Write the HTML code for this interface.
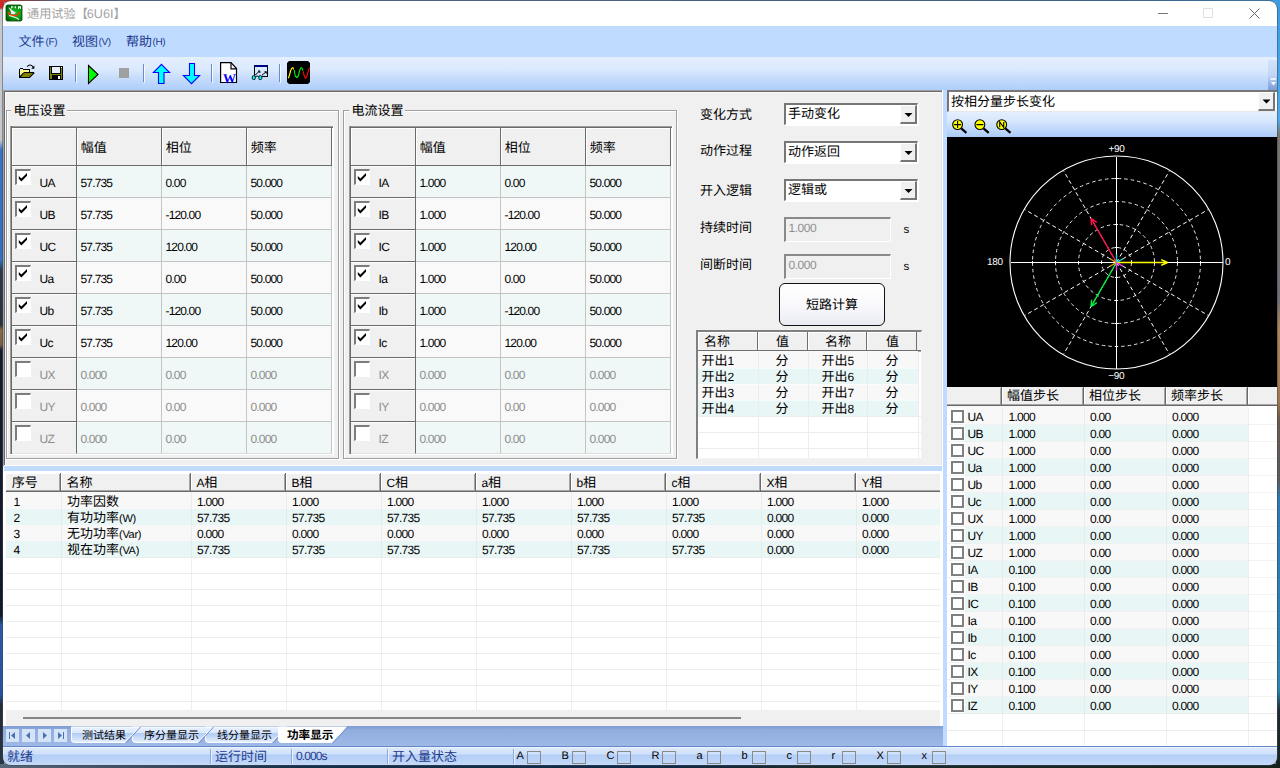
<!DOCTYPE html>
<html lang="zh"><head><meta charset="utf-8"><title>通用试验【6U6I】</title>
<style>
html,body{margin:0;padding:0}
body{width:1280px;height:768px;overflow:hidden;position:relative;background:#1c2a2a;font-family:"Liberation Sans","Noto Sans CJK SC",sans-serif;font-size:12px;line-height:16px;text-rendering:geometricPrecision;-webkit-font-smoothing:antialiased}
div,span.t{position:absolute;box-sizing:border-box}
span.t{white-space:nowrap;line-height:16px}
.c{font-size:13px;letter-spacing:0}
svg.ic{position:absolute;overflow:visible}
</style></head>
<body>
<div class="" style="left:0px;top:0px;width:1280px;height:768px;background:#8fa0b8"></div>
<div class="" style="left:0px;top:0px;width:4px;height:768px;background:linear-gradient(#d02424 0,#cf2a2a 8px,#c9c9cc 10px,#c6c8cc 140px,#3a74c4 150px,#3570c0 260px,#2a3a4c 270px,#27323c 325px,#8a6a40 330px,#7a6040 345px,#141c2c 350px,#10182a 615px,#2858a8 625px,#2452a0 695px,#232c38 705px,#2a3644 768px)"></div>
<div class="" style="left:1276px;top:0px;width:4px;height:768px;background:linear-gradient(#3a9ce2 0,#52aae8 120px,#7a746c 135px,#6f7078 300px,#b08658 330px,#a07850 400px,#6a5a4c 420px,#5a5a60 480px,#2c7ab4 500px,#2a86b0 690px,#1c2c30 710px,#16221e 768px)"></div>
<div class="" style="left:0px;top:0px;width:1280px;height:2px;background:linear-gradient(90deg,#c8302a 0,#c8302a 18px,#8a5a5a 40px,#5c7fb0 60px,#4a78b0 900px,#2f7fc0 1100px,#3aa0e6 1280px)"></div>
<div class="" style="left:0px;top:764px;width:1280px;height:4px;background:linear-gradient(90deg,#56677a 0,#3c4c60 150px,#14304c 300px,#0e2a48 650px,#1a2c30 800px,#15221c 1280px)"></div>
<div id="win" style="left:0;top:0;width:1280px;height:768px;clip-path:inset(1px 3px 3px 3px round 8px);background:#fff">
<span class="t " style="left:27px;top:6px;font-size:12px;color:#a2a2a2;"><span style="font-size:12.2px">通用试验【</span></span>
<span class="t " style="left:86.8px;top:6px;font-size:12.6px;color:#a2a2a2;">6U6I</span>
<span class="t " style="left:113.6px;top:6px;font-size:12px;color:#a2a2a2;"><span style="font-size:12.2px">】</span></span>
<div class="" style="left:1158px;top:13px;width:10px;height:1px;background:#777"></div>
<div class="" style="left:1203px;top:8px;width:10px;height:10px;border:1px solid #dedede;border-radius:1px"></div>
<svg class="ic" style="left:1249px;top:8px" width="11" height="11"><path d="M0.5 0.5L10.5 10.5M10.5 0.5L0.5 10.5" stroke="#666" stroke-width="1" fill="none"/></svg>
<div class="" style="left:0px;top:26px;width:1280px;height:31px;background:#bfdbff"></div>
<span class="t " style="left:18.5px;top:34px;font-size:11px;color:#1e3a8e;"><span class="c">文件</span></span>
<span class="t " style="left:45.5px;top:35px;font-size:10px;color:#1e3a8e;letter-spacing:-0.4px;">(F)</span>
<span class="t " style="left:72px;top:34px;font-size:11px;color:#1e3a8e;"><span class="c">视图</span></span>
<span class="t " style="left:98.5px;top:35px;font-size:10px;color:#1e3a8e;letter-spacing:-0.4px;">(V)</span>
<span class="t " style="left:126px;top:34px;font-size:11px;color:#1e3a8e;"><span class="c">帮助</span></span>
<span class="t " style="left:152.5px;top:35px;font-size:10px;color:#1e3a8e;letter-spacing:-0.4px;">(H)</span>
<div class="" style="left:0px;top:57px;width:1280px;height:33px;background:linear-gradient(#e4efff 0,#dceafe 35%,#c6dcfc 65%,#adcefb 100%)"></div>
<div class="" style="left:1268px;top:60px;width:10px;height:30px;background:linear-gradient(#d3e3fb 0,#c2d6f6 50%,#7c9cd6 100%);border-radius:0 3px 0 0"></div>
<div class="" style="left:75px;top:64px;width:1px;height:18px;background:#6a8ccb"></div>
<div class="" style="left:76px;top:65px;width:1px;height:18px;background:#fff;opacity:.8"></div>
<div class="" style="left:143px;top:64px;width:1px;height:18px;background:#6a8ccb"></div>
<div class="" style="left:144px;top:65px;width:1px;height:18px;background:#fff;opacity:.8"></div>
<div class="" style="left:211px;top:64px;width:1px;height:18px;background:#6a8ccb"></div>
<div class="" style="left:212px;top:65px;width:1px;height:18px;background:#fff;opacity:.8"></div>
<div class="" style="left:279px;top:64px;width:1px;height:18px;background:#6a8ccb"></div>
<div class="" style="left:280px;top:65px;width:1px;height:18px;background:#fff;opacity:.8"></div>
<div class="" style="left:3px;top:90px;width:939px;height:376px;background:#a0a0a0"></div>
<div class="" style="left:4px;top:91px;width:938px;height:375px;background:#696969"></div>
<div class="" style="left:5px;top:92px;width:937px;height:374px;background:#f9f9f9"></div>
<div class="" style="left:6px;top:93px;width:935px;height:372px;background:#f0f0f0"></div>
<div class="" style="left:6px;top:110px;width:333px;height:349px;border:1px solid #a0a0a0;box-shadow:1px 1px 0 #fff, inset 1px 1px 0 #fff"></div>
<div class="" style="left:11.4px;top:104px;width:56px;height:14px;background:#f0f0f0"></div>
<span class="t " style="left:13.4px;top:103px;font-size:12px;color:#000;"><span class="c">电压设置</span></span>
<div class="" style="left:343px;top:110px;width:334px;height:349px;border:1px solid #a0a0a0;box-shadow:1px 1px 0 #fff, inset 1px 1px 0 #fff"></div>
<div class="" style="left:349.4px;top:104px;width:56px;height:14px;background:#f0f0f0"></div>
<span class="t " style="left:351.4px;top:103px;font-size:12px;color:#000;"><span class="c">电流设置</span></span>
<div class="" style="left:10px;top:126px;width:324px;height:329px;background:#fff"></div>
<div class="" style="left:10px;top:126px;width:323px;height:2px;background:linear-gradient(#9c9c9c 50%,#6b6b6b 50%)"></div>
<div class="" style="left:10px;top:126px;width:2px;height:328px;background:linear-gradient(90deg,#9c9c9c 50%,#6b6b6b 50%)"></div>
<div class="" style="left:12px;top:128px;width:65px;height:38px;background:#f0f0f0;border-right:1px solid #6b6b6b;border-bottom:1px solid #6b6b6b;box-shadow:inset 1px 1px 0 #fff"></div>
<div class="" style="left:77px;top:128px;width:85px;height:38px;background:#f0f0f0;border-right:1px solid #6b6b6b;border-bottom:1px solid #6b6b6b;box-shadow:inset 1px 1px 0 #fff"></div>
<div class="" style="left:162px;top:128px;width:85px;height:38px;background:#f0f0f0;border-right:1px solid #6b6b6b;border-bottom:1px solid #6b6b6b;box-shadow:inset 1px 1px 0 #fff"></div>
<div class="" style="left:247px;top:128px;width:85px;height:38px;background:#f0f0f0;border-right:1px solid #6b6b6b;border-bottom:1px solid #6b6b6b;box-shadow:inset 1px 1px 0 #fff"></div>
<span class="t " style="left:80.8px;top:140px;font-size:12px;color:#000;"><span class="c">幅值</span></span>
<span class="t " style="left:165.8px;top:140px;font-size:12px;color:#000;"><span class="c">相位</span></span>
<span class="t " style="left:250.8px;top:140px;font-size:12px;color:#000;"><span class="c">频率</span></span>
<div class="" style="left:12px;top:166px;width:65px;height:32px;background:#f0f0f0;border-right:1px solid #6b6b6b;border-bottom:1px solid #6b6b6b;box-shadow:inset 0 1px 0 #fff"></div>
<div class="" style="left:77px;top:166px;width:85px;height:32px;background:#eff8f7;border-right:1px solid #c4c4c4;border-bottom:1px solid #c4c4c4"></div>
<div class="" style="left:162px;top:166px;width:85px;height:32px;background:#eff8f7;border-right:1px solid #c4c4c4;border-bottom:1px solid #c4c4c4"></div>
<div class="" style="left:247px;top:166px;width:85px;height:32px;background:#eff8f7;border-right:1px solid #c4c4c4;border-bottom:1px solid #c4c4c4"></div>
<div class="" style="left:15px;top:169px;width:16px;height:16px;background:#fff;border-top:2px solid #7d7d7d;border-left:2px solid #7d7d7d;border-right:1px solid #fff;border-bottom:1px solid #fff"></div>
<svg class="ic" style="left:15px;top:169px" width="16" height="16"><path d="M3.8 7L6.4 9.6L12 4V6.8L6.4 12.4L3.8 9.8z" fill="#000"/></svg>
<span class="t " style="left:39.5px;top:175px;font-size:12px;color:#000;letter-spacing:-0.55px;">UA</span>
<span class="t " style="left:80.5px;top:175px;font-size:12px;color:#000;letter-spacing:-0.85px;">57.735</span>
<span class="t " style="left:165.5px;top:175px;font-size:12px;color:#000;letter-spacing:-0.85px;">0.00</span>
<span class="t " style="left:250.5px;top:175px;font-size:12px;color:#000;letter-spacing:-0.85px;">50.000</span>
<div class="" style="left:12px;top:198px;width:65px;height:32px;background:#f0f0f0;border-right:1px solid #6b6b6b;border-bottom:1px solid #6b6b6b;box-shadow:inset 0 1px 0 #fff"></div>
<div class="" style="left:77px;top:198px;width:85px;height:32px;background:#f9f9f9;border-right:1px solid #c4c4c4;border-bottom:1px solid #c4c4c4"></div>
<div class="" style="left:162px;top:198px;width:85px;height:32px;background:#f9f9f9;border-right:1px solid #c4c4c4;border-bottom:1px solid #c4c4c4"></div>
<div class="" style="left:247px;top:198px;width:85px;height:32px;background:#f9f9f9;border-right:1px solid #c4c4c4;border-bottom:1px solid #c4c4c4"></div>
<div class="" style="left:15px;top:201px;width:16px;height:16px;background:#fff;border-top:2px solid #7d7d7d;border-left:2px solid #7d7d7d;border-right:1px solid #fff;border-bottom:1px solid #fff"></div>
<svg class="ic" style="left:15px;top:201px" width="16" height="16"><path d="M3.8 7L6.4 9.6L12 4V6.8L6.4 12.4L3.8 9.8z" fill="#000"/></svg>
<span class="t " style="left:39.5px;top:207px;font-size:12px;color:#000;letter-spacing:-0.55px;">UB</span>
<span class="t " style="left:80.5px;top:207px;font-size:12px;color:#000;letter-spacing:-0.85px;">57.735</span>
<span class="t " style="left:165.5px;top:207px;font-size:12px;color:#000;letter-spacing:-0.85px;">-120.00</span>
<span class="t " style="left:250.5px;top:207px;font-size:12px;color:#000;letter-spacing:-0.85px;">50.000</span>
<div class="" style="left:12px;top:230px;width:65px;height:32px;background:#f0f0f0;border-right:1px solid #6b6b6b;border-bottom:1px solid #6b6b6b;box-shadow:inset 0 1px 0 #fff"></div>
<div class="" style="left:77px;top:230px;width:85px;height:32px;background:#eff8f7;border-right:1px solid #c4c4c4;border-bottom:1px solid #c4c4c4"></div>
<div class="" style="left:162px;top:230px;width:85px;height:32px;background:#eff8f7;border-right:1px solid #c4c4c4;border-bottom:1px solid #c4c4c4"></div>
<div class="" style="left:247px;top:230px;width:85px;height:32px;background:#eff8f7;border-right:1px solid #c4c4c4;border-bottom:1px solid #c4c4c4"></div>
<div class="" style="left:15px;top:233px;width:16px;height:16px;background:#fff;border-top:2px solid #7d7d7d;border-left:2px solid #7d7d7d;border-right:1px solid #fff;border-bottom:1px solid #fff"></div>
<svg class="ic" style="left:15px;top:233px" width="16" height="16"><path d="M3.8 7L6.4 9.6L12 4V6.8L6.4 12.4L3.8 9.8z" fill="#000"/></svg>
<span class="t " style="left:39.5px;top:239px;font-size:12px;color:#000;letter-spacing:-0.55px;">UC</span>
<span class="t " style="left:80.5px;top:239px;font-size:12px;color:#000;letter-spacing:-0.85px;">57.735</span>
<span class="t " style="left:165.5px;top:239px;font-size:12px;color:#000;letter-spacing:-0.85px;">120.00</span>
<span class="t " style="left:250.5px;top:239px;font-size:12px;color:#000;letter-spacing:-0.85px;">50.000</span>
<div class="" style="left:12px;top:262px;width:65px;height:32px;background:#f0f0f0;border-right:1px solid #6b6b6b;border-bottom:1px solid #6b6b6b;box-shadow:inset 0 1px 0 #fff"></div>
<div class="" style="left:77px;top:262px;width:85px;height:32px;background:#f9f9f9;border-right:1px solid #c4c4c4;border-bottom:1px solid #c4c4c4"></div>
<div class="" style="left:162px;top:262px;width:85px;height:32px;background:#f9f9f9;border-right:1px solid #c4c4c4;border-bottom:1px solid #c4c4c4"></div>
<div class="" style="left:247px;top:262px;width:85px;height:32px;background:#f9f9f9;border-right:1px solid #c4c4c4;border-bottom:1px solid #c4c4c4"></div>
<div class="" style="left:15px;top:265px;width:16px;height:16px;background:#fff;border-top:2px solid #7d7d7d;border-left:2px solid #7d7d7d;border-right:1px solid #fff;border-bottom:1px solid #fff"></div>
<svg class="ic" style="left:15px;top:265px" width="16" height="16"><path d="M3.8 7L6.4 9.6L12 4V6.8L6.4 12.4L3.8 9.8z" fill="#000"/></svg>
<span class="t " style="left:39.5px;top:271px;font-size:12px;color:#000;letter-spacing:-0.55px;">Ua</span>
<span class="t " style="left:80.5px;top:271px;font-size:12px;color:#000;letter-spacing:-0.85px;">57.735</span>
<span class="t " style="left:165.5px;top:271px;font-size:12px;color:#000;letter-spacing:-0.85px;">0.00</span>
<span class="t " style="left:250.5px;top:271px;font-size:12px;color:#000;letter-spacing:-0.85px;">50.000</span>
<div class="" style="left:12px;top:294px;width:65px;height:32px;background:#f0f0f0;border-right:1px solid #6b6b6b;border-bottom:1px solid #6b6b6b;box-shadow:inset 0 1px 0 #fff"></div>
<div class="" style="left:77px;top:294px;width:85px;height:32px;background:#eff8f7;border-right:1px solid #c4c4c4;border-bottom:1px solid #c4c4c4"></div>
<div class="" style="left:162px;top:294px;width:85px;height:32px;background:#eff8f7;border-right:1px solid #c4c4c4;border-bottom:1px solid #c4c4c4"></div>
<div class="" style="left:247px;top:294px;width:85px;height:32px;background:#eff8f7;border-right:1px solid #c4c4c4;border-bottom:1px solid #c4c4c4"></div>
<div class="" style="left:15px;top:297px;width:16px;height:16px;background:#fff;border-top:2px solid #7d7d7d;border-left:2px solid #7d7d7d;border-right:1px solid #fff;border-bottom:1px solid #fff"></div>
<svg class="ic" style="left:15px;top:297px" width="16" height="16"><path d="M3.8 7L6.4 9.6L12 4V6.8L6.4 12.4L3.8 9.8z" fill="#000"/></svg>
<span class="t " style="left:39.5px;top:303px;font-size:12px;color:#000;letter-spacing:-0.55px;">Ub</span>
<span class="t " style="left:80.5px;top:303px;font-size:12px;color:#000;letter-spacing:-0.85px;">57.735</span>
<span class="t " style="left:165.5px;top:303px;font-size:12px;color:#000;letter-spacing:-0.85px;">-120.00</span>
<span class="t " style="left:250.5px;top:303px;font-size:12px;color:#000;letter-spacing:-0.85px;">50.000</span>
<div class="" style="left:12px;top:326px;width:65px;height:32px;background:#f0f0f0;border-right:1px solid #6b6b6b;border-bottom:1px solid #6b6b6b;box-shadow:inset 0 1px 0 #fff"></div>
<div class="" style="left:77px;top:326px;width:85px;height:32px;background:#f9f9f9;border-right:1px solid #c4c4c4;border-bottom:1px solid #c4c4c4"></div>
<div class="" style="left:162px;top:326px;width:85px;height:32px;background:#f9f9f9;border-right:1px solid #c4c4c4;border-bottom:1px solid #c4c4c4"></div>
<div class="" style="left:247px;top:326px;width:85px;height:32px;background:#f9f9f9;border-right:1px solid #c4c4c4;border-bottom:1px solid #c4c4c4"></div>
<div class="" style="left:15px;top:329px;width:16px;height:16px;background:#fff;border-top:2px solid #7d7d7d;border-left:2px solid #7d7d7d;border-right:1px solid #fff;border-bottom:1px solid #fff"></div>
<svg class="ic" style="left:15px;top:329px" width="16" height="16"><path d="M3.8 7L6.4 9.6L12 4V6.8L6.4 12.4L3.8 9.8z" fill="#000"/></svg>
<span class="t " style="left:39.5px;top:335px;font-size:12px;color:#000;letter-spacing:-0.55px;">Uc</span>
<span class="t " style="left:80.5px;top:335px;font-size:12px;color:#000;letter-spacing:-0.85px;">57.735</span>
<span class="t " style="left:165.5px;top:335px;font-size:12px;color:#000;letter-spacing:-0.85px;">120.00</span>
<span class="t " style="left:250.5px;top:335px;font-size:12px;color:#000;letter-spacing:-0.85px;">50.000</span>
<div class="" style="left:12px;top:358px;width:65px;height:32px;background:#f0f0f0;border-right:1px solid #6b6b6b;border-bottom:1px solid #6b6b6b;box-shadow:inset 0 1px 0 #fff"></div>
<div class="" style="left:77px;top:358px;width:85px;height:32px;background:#eff8f7;border-right:1px solid #c4c4c4;border-bottom:1px solid #c4c4c4"></div>
<div class="" style="left:162px;top:358px;width:85px;height:32px;background:#eff8f7;border-right:1px solid #c4c4c4;border-bottom:1px solid #c4c4c4"></div>
<div class="" style="left:247px;top:358px;width:85px;height:32px;background:#eff8f7;border-right:1px solid #c4c4c4;border-bottom:1px solid #c4c4c4"></div>
<div class="" style="left:15px;top:361px;width:16px;height:16px;background:#fff;border-top:2px solid #7d7d7d;border-left:2px solid #7d7d7d;border-right:1px solid #fff;border-bottom:1px solid #fff"></div>
<span class="t " style="left:39.5px;top:367px;font-size:12px;color:#8c8c8c;letter-spacing:-0.55px;">UX</span>
<span class="t " style="left:80.5px;top:367px;font-size:12px;color:#8c8c8c;letter-spacing:-0.85px;">0.000</span>
<span class="t " style="left:165.5px;top:367px;font-size:12px;color:#8c8c8c;letter-spacing:-0.85px;">0.00</span>
<span class="t " style="left:250.5px;top:367px;font-size:12px;color:#8c8c8c;letter-spacing:-0.85px;">0.000</span>
<div class="" style="left:12px;top:390px;width:65px;height:32px;background:#f0f0f0;border-right:1px solid #6b6b6b;border-bottom:1px solid #6b6b6b;box-shadow:inset 0 1px 0 #fff"></div>
<div class="" style="left:77px;top:390px;width:85px;height:32px;background:#f9f9f9;border-right:1px solid #c4c4c4;border-bottom:1px solid #c4c4c4"></div>
<div class="" style="left:162px;top:390px;width:85px;height:32px;background:#f9f9f9;border-right:1px solid #c4c4c4;border-bottom:1px solid #c4c4c4"></div>
<div class="" style="left:247px;top:390px;width:85px;height:32px;background:#f9f9f9;border-right:1px solid #c4c4c4;border-bottom:1px solid #c4c4c4"></div>
<div class="" style="left:15px;top:393px;width:16px;height:16px;background:#fff;border-top:2px solid #7d7d7d;border-left:2px solid #7d7d7d;border-right:1px solid #fff;border-bottom:1px solid #fff"></div>
<span class="t " style="left:39.5px;top:399px;font-size:12px;color:#8c8c8c;letter-spacing:-0.55px;">UY</span>
<span class="t " style="left:80.5px;top:399px;font-size:12px;color:#8c8c8c;letter-spacing:-0.85px;">0.000</span>
<span class="t " style="left:165.5px;top:399px;font-size:12px;color:#8c8c8c;letter-spacing:-0.85px;">0.00</span>
<span class="t " style="left:250.5px;top:399px;font-size:12px;color:#8c8c8c;letter-spacing:-0.85px;">0.000</span>
<div class="" style="left:12px;top:422px;width:65px;height:32px;background:#f0f0f0;border-right:1px solid #6b6b6b;border-bottom:1px solid #e4e4e4;box-shadow:inset 0 1px 0 #fff"></div>
<div class="" style="left:77px;top:422px;width:85px;height:32px;background:#eff8f7;border-right:1px solid #c4c4c4;border-bottom:1px solid #dedede"></div>
<div class="" style="left:162px;top:422px;width:85px;height:32px;background:#eff8f7;border-right:1px solid #c4c4c4;border-bottom:1px solid #dedede"></div>
<div class="" style="left:247px;top:422px;width:85px;height:32px;background:#eff8f7;border-right:1px solid #c4c4c4;border-bottom:1px solid #dedede"></div>
<div class="" style="left:15px;top:425px;width:16px;height:16px;background:#fff;border-top:2px solid #7d7d7d;border-left:2px solid #7d7d7d;border-right:1px solid #fff;border-bottom:1px solid #fff"></div>
<span class="t " style="left:39.5px;top:431px;font-size:12px;color:#8c8c8c;letter-spacing:-0.55px;">UZ</span>
<span class="t " style="left:80.5px;top:431px;font-size:12px;color:#8c8c8c;letter-spacing:-0.85px;">0.000</span>
<span class="t " style="left:165.5px;top:431px;font-size:12px;color:#8c8c8c;letter-spacing:-0.85px;">0.00</span>
<span class="t " style="left:250.5px;top:431px;font-size:12px;color:#8c8c8c;letter-spacing:-0.85px;">0.000</span>
<div class="" style="left:349px;top:126px;width:324px;height:329px;background:#fff"></div>
<div class="" style="left:349px;top:126px;width:323px;height:2px;background:linear-gradient(#9c9c9c 50%,#6b6b6b 50%)"></div>
<div class="" style="left:349px;top:126px;width:2px;height:328px;background:linear-gradient(90deg,#9c9c9c 50%,#6b6b6b 50%)"></div>
<div class="" style="left:351px;top:128px;width:65px;height:38px;background:#f0f0f0;border-right:1px solid #6b6b6b;border-bottom:1px solid #6b6b6b;box-shadow:inset 1px 1px 0 #fff"></div>
<div class="" style="left:416px;top:128px;width:85px;height:38px;background:#f0f0f0;border-right:1px solid #6b6b6b;border-bottom:1px solid #6b6b6b;box-shadow:inset 1px 1px 0 #fff"></div>
<div class="" style="left:501px;top:128px;width:85px;height:38px;background:#f0f0f0;border-right:1px solid #6b6b6b;border-bottom:1px solid #6b6b6b;box-shadow:inset 1px 1px 0 #fff"></div>
<div class="" style="left:586px;top:128px;width:85px;height:38px;background:#f0f0f0;border-right:1px solid #6b6b6b;border-bottom:1px solid #6b6b6b;box-shadow:inset 1px 1px 0 #fff"></div>
<span class="t " style="left:419.8px;top:140px;font-size:12px;color:#000;"><span class="c">幅值</span></span>
<span class="t " style="left:504.8px;top:140px;font-size:12px;color:#000;"><span class="c">相位</span></span>
<span class="t " style="left:589.8px;top:140px;font-size:12px;color:#000;"><span class="c">频率</span></span>
<div class="" style="left:351px;top:166px;width:65px;height:32px;background:#f0f0f0;border-right:1px solid #6b6b6b;border-bottom:1px solid #6b6b6b;box-shadow:inset 0 1px 0 #fff"></div>
<div class="" style="left:416px;top:166px;width:85px;height:32px;background:#eff8f7;border-right:1px solid #c4c4c4;border-bottom:1px solid #c4c4c4"></div>
<div class="" style="left:501px;top:166px;width:85px;height:32px;background:#eff8f7;border-right:1px solid #c4c4c4;border-bottom:1px solid #c4c4c4"></div>
<div class="" style="left:586px;top:166px;width:85px;height:32px;background:#eff8f7;border-right:1px solid #c4c4c4;border-bottom:1px solid #c4c4c4"></div>
<div class="" style="left:354px;top:169px;width:16px;height:16px;background:#fff;border-top:2px solid #7d7d7d;border-left:2px solid #7d7d7d;border-right:1px solid #fff;border-bottom:1px solid #fff"></div>
<svg class="ic" style="left:354px;top:169px" width="16" height="16"><path d="M3.8 7L6.4 9.6L12 4V6.8L6.4 12.4L3.8 9.8z" fill="#000"/></svg>
<span class="t " style="left:378.5px;top:175px;font-size:12px;color:#000;letter-spacing:-0.55px;">IA</span>
<span class="t " style="left:419.5px;top:175px;font-size:12px;color:#000;letter-spacing:-0.85px;">1.000</span>
<span class="t " style="left:504.5px;top:175px;font-size:12px;color:#000;letter-spacing:-0.85px;">0.00</span>
<span class="t " style="left:589.5px;top:175px;font-size:12px;color:#000;letter-spacing:-0.85px;">50.000</span>
<div class="" style="left:351px;top:198px;width:65px;height:32px;background:#f0f0f0;border-right:1px solid #6b6b6b;border-bottom:1px solid #6b6b6b;box-shadow:inset 0 1px 0 #fff"></div>
<div class="" style="left:416px;top:198px;width:85px;height:32px;background:#f9f9f9;border-right:1px solid #c4c4c4;border-bottom:1px solid #c4c4c4"></div>
<div class="" style="left:501px;top:198px;width:85px;height:32px;background:#f9f9f9;border-right:1px solid #c4c4c4;border-bottom:1px solid #c4c4c4"></div>
<div class="" style="left:586px;top:198px;width:85px;height:32px;background:#f9f9f9;border-right:1px solid #c4c4c4;border-bottom:1px solid #c4c4c4"></div>
<div class="" style="left:354px;top:201px;width:16px;height:16px;background:#fff;border-top:2px solid #7d7d7d;border-left:2px solid #7d7d7d;border-right:1px solid #fff;border-bottom:1px solid #fff"></div>
<svg class="ic" style="left:354px;top:201px" width="16" height="16"><path d="M3.8 7L6.4 9.6L12 4V6.8L6.4 12.4L3.8 9.8z" fill="#000"/></svg>
<span class="t " style="left:378.5px;top:207px;font-size:12px;color:#000;letter-spacing:-0.55px;">IB</span>
<span class="t " style="left:419.5px;top:207px;font-size:12px;color:#000;letter-spacing:-0.85px;">1.000</span>
<span class="t " style="left:504.5px;top:207px;font-size:12px;color:#000;letter-spacing:-0.85px;">-120.00</span>
<span class="t " style="left:589.5px;top:207px;font-size:12px;color:#000;letter-spacing:-0.85px;">50.000</span>
<div class="" style="left:351px;top:230px;width:65px;height:32px;background:#f0f0f0;border-right:1px solid #6b6b6b;border-bottom:1px solid #6b6b6b;box-shadow:inset 0 1px 0 #fff"></div>
<div class="" style="left:416px;top:230px;width:85px;height:32px;background:#eff8f7;border-right:1px solid #c4c4c4;border-bottom:1px solid #c4c4c4"></div>
<div class="" style="left:501px;top:230px;width:85px;height:32px;background:#eff8f7;border-right:1px solid #c4c4c4;border-bottom:1px solid #c4c4c4"></div>
<div class="" style="left:586px;top:230px;width:85px;height:32px;background:#eff8f7;border-right:1px solid #c4c4c4;border-bottom:1px solid #c4c4c4"></div>
<div class="" style="left:354px;top:233px;width:16px;height:16px;background:#fff;border-top:2px solid #7d7d7d;border-left:2px solid #7d7d7d;border-right:1px solid #fff;border-bottom:1px solid #fff"></div>
<svg class="ic" style="left:354px;top:233px" width="16" height="16"><path d="M3.8 7L6.4 9.6L12 4V6.8L6.4 12.4L3.8 9.8z" fill="#000"/></svg>
<span class="t " style="left:378.5px;top:239px;font-size:12px;color:#000;letter-spacing:-0.55px;">IC</span>
<span class="t " style="left:419.5px;top:239px;font-size:12px;color:#000;letter-spacing:-0.85px;">1.000</span>
<span class="t " style="left:504.5px;top:239px;font-size:12px;color:#000;letter-spacing:-0.85px;">120.00</span>
<span class="t " style="left:589.5px;top:239px;font-size:12px;color:#000;letter-spacing:-0.85px;">50.000</span>
<div class="" style="left:351px;top:262px;width:65px;height:32px;background:#f0f0f0;border-right:1px solid #6b6b6b;border-bottom:1px solid #6b6b6b;box-shadow:inset 0 1px 0 #fff"></div>
<div class="" style="left:416px;top:262px;width:85px;height:32px;background:#f9f9f9;border-right:1px solid #c4c4c4;border-bottom:1px solid #c4c4c4"></div>
<div class="" style="left:501px;top:262px;width:85px;height:32px;background:#f9f9f9;border-right:1px solid #c4c4c4;border-bottom:1px solid #c4c4c4"></div>
<div class="" style="left:586px;top:262px;width:85px;height:32px;background:#f9f9f9;border-right:1px solid #c4c4c4;border-bottom:1px solid #c4c4c4"></div>
<div class="" style="left:354px;top:265px;width:16px;height:16px;background:#fff;border-top:2px solid #7d7d7d;border-left:2px solid #7d7d7d;border-right:1px solid #fff;border-bottom:1px solid #fff"></div>
<svg class="ic" style="left:354px;top:265px" width="16" height="16"><path d="M3.8 7L6.4 9.6L12 4V6.8L6.4 12.4L3.8 9.8z" fill="#000"/></svg>
<span class="t " style="left:378.5px;top:271px;font-size:12px;color:#000;letter-spacing:-0.55px;">Ia</span>
<span class="t " style="left:419.5px;top:271px;font-size:12px;color:#000;letter-spacing:-0.85px;">1.000</span>
<span class="t " style="left:504.5px;top:271px;font-size:12px;color:#000;letter-spacing:-0.85px;">0.00</span>
<span class="t " style="left:589.5px;top:271px;font-size:12px;color:#000;letter-spacing:-0.85px;">50.000</span>
<div class="" style="left:351px;top:294px;width:65px;height:32px;background:#f0f0f0;border-right:1px solid #6b6b6b;border-bottom:1px solid #6b6b6b;box-shadow:inset 0 1px 0 #fff"></div>
<div class="" style="left:416px;top:294px;width:85px;height:32px;background:#eff8f7;border-right:1px solid #c4c4c4;border-bottom:1px solid #c4c4c4"></div>
<div class="" style="left:501px;top:294px;width:85px;height:32px;background:#eff8f7;border-right:1px solid #c4c4c4;border-bottom:1px solid #c4c4c4"></div>
<div class="" style="left:586px;top:294px;width:85px;height:32px;background:#eff8f7;border-right:1px solid #c4c4c4;border-bottom:1px solid #c4c4c4"></div>
<div class="" style="left:354px;top:297px;width:16px;height:16px;background:#fff;border-top:2px solid #7d7d7d;border-left:2px solid #7d7d7d;border-right:1px solid #fff;border-bottom:1px solid #fff"></div>
<svg class="ic" style="left:354px;top:297px" width="16" height="16"><path d="M3.8 7L6.4 9.6L12 4V6.8L6.4 12.4L3.8 9.8z" fill="#000"/></svg>
<span class="t " style="left:378.5px;top:303px;font-size:12px;color:#000;letter-spacing:-0.55px;">Ib</span>
<span class="t " style="left:419.5px;top:303px;font-size:12px;color:#000;letter-spacing:-0.85px;">1.000</span>
<span class="t " style="left:504.5px;top:303px;font-size:12px;color:#000;letter-spacing:-0.85px;">-120.00</span>
<span class="t " style="left:589.5px;top:303px;font-size:12px;color:#000;letter-spacing:-0.85px;">50.000</span>
<div class="" style="left:351px;top:326px;width:65px;height:32px;background:#f0f0f0;border-right:1px solid #6b6b6b;border-bottom:1px solid #6b6b6b;box-shadow:inset 0 1px 0 #fff"></div>
<div class="" style="left:416px;top:326px;width:85px;height:32px;background:#f9f9f9;border-right:1px solid #c4c4c4;border-bottom:1px solid #c4c4c4"></div>
<div class="" style="left:501px;top:326px;width:85px;height:32px;background:#f9f9f9;border-right:1px solid #c4c4c4;border-bottom:1px solid #c4c4c4"></div>
<div class="" style="left:586px;top:326px;width:85px;height:32px;background:#f9f9f9;border-right:1px solid #c4c4c4;border-bottom:1px solid #c4c4c4"></div>
<div class="" style="left:354px;top:329px;width:16px;height:16px;background:#fff;border-top:2px solid #7d7d7d;border-left:2px solid #7d7d7d;border-right:1px solid #fff;border-bottom:1px solid #fff"></div>
<svg class="ic" style="left:354px;top:329px" width="16" height="16"><path d="M3.8 7L6.4 9.6L12 4V6.8L6.4 12.4L3.8 9.8z" fill="#000"/></svg>
<span class="t " style="left:378.5px;top:335px;font-size:12px;color:#000;letter-spacing:-0.55px;">Ic</span>
<span class="t " style="left:419.5px;top:335px;font-size:12px;color:#000;letter-spacing:-0.85px;">1.000</span>
<span class="t " style="left:504.5px;top:335px;font-size:12px;color:#000;letter-spacing:-0.85px;">120.00</span>
<span class="t " style="left:589.5px;top:335px;font-size:12px;color:#000;letter-spacing:-0.85px;">50.000</span>
<div class="" style="left:351px;top:358px;width:65px;height:32px;background:#f0f0f0;border-right:1px solid #6b6b6b;border-bottom:1px solid #6b6b6b;box-shadow:inset 0 1px 0 #fff"></div>
<div class="" style="left:416px;top:358px;width:85px;height:32px;background:#eff8f7;border-right:1px solid #c4c4c4;border-bottom:1px solid #c4c4c4"></div>
<div class="" style="left:501px;top:358px;width:85px;height:32px;background:#eff8f7;border-right:1px solid #c4c4c4;border-bottom:1px solid #c4c4c4"></div>
<div class="" style="left:586px;top:358px;width:85px;height:32px;background:#eff8f7;border-right:1px solid #c4c4c4;border-bottom:1px solid #c4c4c4"></div>
<div class="" style="left:354px;top:361px;width:16px;height:16px;background:#fff;border-top:2px solid #7d7d7d;border-left:2px solid #7d7d7d;border-right:1px solid #fff;border-bottom:1px solid #fff"></div>
<span class="t " style="left:378.5px;top:367px;font-size:12px;color:#8c8c8c;letter-spacing:-0.55px;">IX</span>
<span class="t " style="left:419.5px;top:367px;font-size:12px;color:#8c8c8c;letter-spacing:-0.85px;">0.000</span>
<span class="t " style="left:504.5px;top:367px;font-size:12px;color:#8c8c8c;letter-spacing:-0.85px;">0.00</span>
<span class="t " style="left:589.5px;top:367px;font-size:12px;color:#8c8c8c;letter-spacing:-0.85px;">0.000</span>
<div class="" style="left:351px;top:390px;width:65px;height:32px;background:#f0f0f0;border-right:1px solid #6b6b6b;border-bottom:1px solid #6b6b6b;box-shadow:inset 0 1px 0 #fff"></div>
<div class="" style="left:416px;top:390px;width:85px;height:32px;background:#f9f9f9;border-right:1px solid #c4c4c4;border-bottom:1px solid #c4c4c4"></div>
<div class="" style="left:501px;top:390px;width:85px;height:32px;background:#f9f9f9;border-right:1px solid #c4c4c4;border-bottom:1px solid #c4c4c4"></div>
<div class="" style="left:586px;top:390px;width:85px;height:32px;background:#f9f9f9;border-right:1px solid #c4c4c4;border-bottom:1px solid #c4c4c4"></div>
<div class="" style="left:354px;top:393px;width:16px;height:16px;background:#fff;border-top:2px solid #7d7d7d;border-left:2px solid #7d7d7d;border-right:1px solid #fff;border-bottom:1px solid #fff"></div>
<span class="t " style="left:378.5px;top:399px;font-size:12px;color:#8c8c8c;letter-spacing:-0.55px;">IY</span>
<span class="t " style="left:419.5px;top:399px;font-size:12px;color:#8c8c8c;letter-spacing:-0.85px;">0.000</span>
<span class="t " style="left:504.5px;top:399px;font-size:12px;color:#8c8c8c;letter-spacing:-0.85px;">0.00</span>
<span class="t " style="left:589.5px;top:399px;font-size:12px;color:#8c8c8c;letter-spacing:-0.85px;">0.000</span>
<div class="" style="left:351px;top:422px;width:65px;height:32px;background:#f0f0f0;border-right:1px solid #6b6b6b;border-bottom:1px solid #e4e4e4;box-shadow:inset 0 1px 0 #fff"></div>
<div class="" style="left:416px;top:422px;width:85px;height:32px;background:#eff8f7;border-right:1px solid #c4c4c4;border-bottom:1px solid #dedede"></div>
<div class="" style="left:501px;top:422px;width:85px;height:32px;background:#eff8f7;border-right:1px solid #c4c4c4;border-bottom:1px solid #dedede"></div>
<div class="" style="left:586px;top:422px;width:85px;height:32px;background:#eff8f7;border-right:1px solid #c4c4c4;border-bottom:1px solid #dedede"></div>
<div class="" style="left:354px;top:425px;width:16px;height:16px;background:#fff;border-top:2px solid #7d7d7d;border-left:2px solid #7d7d7d;border-right:1px solid #fff;border-bottom:1px solid #fff"></div>
<span class="t " style="left:378.5px;top:431px;font-size:12px;color:#8c8c8c;letter-spacing:-0.55px;">IZ</span>
<span class="t " style="left:419.5px;top:431px;font-size:12px;color:#8c8c8c;letter-spacing:-0.85px;">0.000</span>
<span class="t " style="left:504.5px;top:431px;font-size:12px;color:#8c8c8c;letter-spacing:-0.85px;">0.00</span>
<span class="t " style="left:589.5px;top:431px;font-size:12px;color:#8c8c8c;letter-spacing:-0.85px;">0.000</span>
<span class="t " style="left:700px;top:107px;font-size:12px;color:#000;"><span class="c">变化方式</span></span>
<div class="" style="left:784px;top:103px;width:134px;height:22px;background:#fff;border-top:2px solid #767676;border-left:2px solid #767676;border-right:1px solid #fff;border-bottom:1px solid #fff;box-shadow:1px 1px 0 #fff"></div>
<div class="" style="left:900px;top:105px;width:17px;height:19px;background:#f0f0f0;border-top:1px solid #fff;border-left:1px solid #fff;border-right:2px solid #767676;border-bottom:2px solid #767676"></div>
<svg class="ic" style="left:904px;top:113px" width="9" height="5"><path d="M0.5 0H8.5L4.5 4z"/></svg>
<span class="t " style="left:788px;top:106px;font-size:12px;color:#000;"><span class="c">手动变化</span></span>
<span class="t " style="left:700px;top:143px;font-size:12px;color:#000;"><span class="c">动作过程</span></span>
<div class="" style="left:784px;top:141px;width:134px;height:22px;background:#fff;border-top:2px solid #767676;border-left:2px solid #767676;border-right:1px solid #fff;border-bottom:1px solid #fff;box-shadow:1px 1px 0 #fff"></div>
<div class="" style="left:900px;top:143px;width:17px;height:19px;background:#f0f0f0;border-top:1px solid #fff;border-left:1px solid #fff;border-right:2px solid #767676;border-bottom:2px solid #767676"></div>
<svg class="ic" style="left:904px;top:151px" width="9" height="5"><path d="M0.5 0H8.5L4.5 4z"/></svg>
<span class="t " style="left:788px;top:144px;font-size:12px;color:#000;"><span class="c">动作返回</span></span>
<span class="t " style="left:700px;top:183px;font-size:12px;color:#000;"><span class="c">开入逻辑</span></span>
<div class="" style="left:784px;top:179px;width:134px;height:22px;background:#fff;border-top:2px solid #767676;border-left:2px solid #767676;border-right:1px solid #fff;border-bottom:1px solid #fff;box-shadow:1px 1px 0 #fff"></div>
<div class="" style="left:900px;top:181px;width:17px;height:19px;background:#f0f0f0;border-top:1px solid #fff;border-left:1px solid #fff;border-right:2px solid #767676;border-bottom:2px solid #767676"></div>
<svg class="ic" style="left:904px;top:189px" width="9" height="5"><path d="M0.5 0H8.5L4.5 4z"/></svg>
<span class="t " style="left:788px;top:182px;font-size:12px;color:#000;"><span class="c">逻辑或</span></span>
<span class="t " style="left:700px;top:220px;font-size:12px;color:#000;"><span class="c">持续时间</span></span>
<div class="" style="left:784px;top:217px;width:107px;height:25px;background:#f0f0f0;border-top:2px solid #8a8a8a;border-left:2px solid #8a8a8a;border-right:1px solid #fff;border-bottom:1px solid #fff"></div>
<span class="t " style="left:788.5px;top:220px;font-size:12px;color:#8f8f8f;letter-spacing:-0.45px;">1.000</span>
<span class="t " style="left:903.5px;top:222px;font-size:11.5px;color:#000;">s</span>
<span class="t " style="left:700px;top:257px;font-size:12px;color:#000;"><span class="c">间断时间</span></span>
<div class="" style="left:784px;top:254px;width:107px;height:25px;background:#f0f0f0;border-top:2px solid #8a8a8a;border-left:2px solid #8a8a8a;border-right:1px solid #fff;border-bottom:1px solid #fff"></div>
<span class="t " style="left:788.5px;top:257px;font-size:12px;color:#8f8f8f;letter-spacing:-0.45px;">0.000</span>
<span class="t " style="left:903.5px;top:259px;font-size:11.5px;color:#000;">s</span>
<div class="" style="left:779px;top:283px;width:106px;height:43px;border:1px solid #111;border-radius:6px;background:linear-gradient(#ffffff 0,#f9f9fc 50%,#ebebf5 100%)"></div>
<span class="t " style="left:806px;top:297px;font-size:12px;color:#000;"><span class="c">短路计算</span></span>
<div class="" style="left:696px;top:330px;width:226px;height:129px;background:#fff;border-top:2px solid #808080;border-left:2px solid #808080;border-right:1px solid #f4f4f4;border-bottom:1px solid #f4f4f4"></div>
<div class="" style="left:698px;top:332px;width:60px;height:19px;background:#f0f0f0;border-right:1px solid #6f6f6f;border-bottom:1px solid #6f6f6f;box-shadow:inset 1px 1px 0 #fff, 0 1px 0 #a8a8a8"></div>
<div class="" style="left:758px;top:332px;width:50px;height:19px;background:#f0f0f0;border-right:1px solid #6f6f6f;border-bottom:1px solid #6f6f6f;box-shadow:inset 1px 1px 0 #fff, 0 1px 0 #a8a8a8"></div>
<div class="" style="left:808px;top:332px;width:59px;height:19px;background:#f0f0f0;border-right:1px solid #6f6f6f;border-bottom:1px solid #6f6f6f;box-shadow:inset 1px 1px 0 #fff, 0 1px 0 #a8a8a8"></div>
<div class="" style="left:867px;top:332px;width:50px;height:19px;background:#f0f0f0;border-right:1px solid #6f6f6f;border-bottom:1px solid #6f6f6f;box-shadow:inset 1px 1px 0 #fff, 0 1px 0 #a8a8a8"></div>
<div class="" style="left:917px;top:332px;width:4px;height:19px;background:#f0f0f0;border-bottom:1px solid #6f6f6f;box-shadow:0 1px 0 #a8a8a8"></div>
<span class="t " style="left:704px;top:334px;font-size:12px;color:#000;"><span class="c">名称</span></span>
<span class="t " style="left:776px;top:334px;font-size:12px;color:#000;"><span class="c">值</span></span>
<span class="t " style="left:825px;top:334px;font-size:12px;color:#000;"><span class="c">名称</span></span>
<span class="t " style="left:886px;top:334px;font-size:12px;color:#000;"><span class="c">值</span></span>
<div class="" style="left:698px;top:351px;width:220px;height:1px;background:#f8f8f8"></div>
<div class="" style="left:698px;top:352px;width:220px;height:16px;background:#f8f8f8"></div>
<span class="t " style="left:701.5px;top:353px;font-size:12px;color:#000;letter-spacing:-0.3px;"><span class="c">开出</span>1</span>
<span class="t " style="left:775.5px;top:353px;font-size:12px;color:#000;"><span class="c">分</span></span>
<span class="t " style="left:821.5px;top:353px;font-size:12px;color:#000;letter-spacing:-0.3px;"><span class="c">开出</span>5</span>
<span class="t " style="left:885.5px;top:353px;font-size:12px;color:#000;"><span class="c">分</span></span>
<div class="" style="left:698px;top:368px;width:220px;height:16px;background:#e9f6f6"></div>
<span class="t " style="left:701.5px;top:369px;font-size:12px;color:#000;letter-spacing:-0.3px;"><span class="c">开出</span>2</span>
<span class="t " style="left:775.5px;top:369px;font-size:12px;color:#000;"><span class="c">分</span></span>
<span class="t " style="left:821.5px;top:369px;font-size:12px;color:#000;letter-spacing:-0.3px;"><span class="c">开出</span>6</span>
<span class="t " style="left:885.5px;top:369px;font-size:12px;color:#000;"><span class="c">分</span></span>
<div class="" style="left:698px;top:384px;width:220px;height:16px;background:#f8f8f8"></div>
<span class="t " style="left:701.5px;top:385px;font-size:12px;color:#000;letter-spacing:-0.3px;"><span class="c">开出</span>3</span>
<span class="t " style="left:775.5px;top:385px;font-size:12px;color:#000;"><span class="c">分</span></span>
<span class="t " style="left:821.5px;top:385px;font-size:12px;color:#000;letter-spacing:-0.3px;"><span class="c">开出</span>7</span>
<span class="t " style="left:885.5px;top:385px;font-size:12px;color:#000;"><span class="c">分</span></span>
<div class="" style="left:698px;top:400px;width:220px;height:16px;background:#e9f6f6"></div>
<span class="t " style="left:701.5px;top:401px;font-size:12px;color:#000;letter-spacing:-0.3px;"><span class="c">开出</span>4</span>
<span class="t " style="left:775.5px;top:401px;font-size:12px;color:#000;"><span class="c">分</span></span>
<span class="t " style="left:821.5px;top:401px;font-size:12px;color:#000;letter-spacing:-0.3px;"><span class="c">开出</span>8</span>
<span class="t " style="left:885.5px;top:401px;font-size:12px;color:#000;"><span class="c">分</span></span>
<div class="" style="left:699px;top:367.5px;width:222px;height:1px;background:rgba(255,255,255,.5)"></div>
<div class="" style="left:699px;top:383.5px;width:222px;height:1px;background:rgba(255,255,255,.5)"></div>
<div class="" style="left:699px;top:399.5px;width:222px;height:1px;background:rgba(255,255,255,.5)"></div>
<div class="" style="left:699px;top:415.5px;width:222px;height:1px;background:#ececec"></div>
<div class="" style="left:699px;top:431.5px;width:222px;height:1px;background:#ececec"></div>
<div class="" style="left:699px;top:447.5px;width:222px;height:1px;background:#ececec"></div>
<div class="" style="left:758px;top:352px;width:1px;height:106px;background:#ececec"></div>
<div class="" style="left:808px;top:352px;width:1px;height:106px;background:#ececec"></div>
<div class="" style="left:867px;top:352px;width:1px;height:106px;background:#ececec"></div>
<div class="" style="left:918px;top:352px;width:1px;height:106px;background:#ececec"></div>
<div class="" style="left:4px;top:465px;width:938px;height:1.3px;background:#fff"></div>
<div class="" style="left:4px;top:466.2px;width:938px;height:4.4px;background:#bfdbfd"></div>
<div class="" style="left:4px;top:471px;width:938px;height:255px;background:#fff"></div>
<div class="" style="left:6px;top:474px;width:934px;height:18px;background:#f0f0f0;border-bottom:1px solid #696969;box-shadow:inset 0 -1px 0 #a6a6a6"></div>
<div class="" style="left:59px;top:474px;width:1px;height:17px;background:#a6a6a6"></div>
<div class="" style="left:60px;top:473px;width:1px;height:19px;background:#696969"></div>
<div class="" style="left:61px;top:474px;width:1px;height:16px;background:#fff"></div>
<div class="" style="left:189px;top:474px;width:1px;height:17px;background:#a6a6a6"></div>
<div class="" style="left:190px;top:473px;width:1px;height:19px;background:#696969"></div>
<div class="" style="left:191px;top:474px;width:1px;height:16px;background:#fff"></div>
<div class="" style="left:284px;top:474px;width:1px;height:17px;background:#a6a6a6"></div>
<div class="" style="left:285px;top:473px;width:1px;height:19px;background:#696969"></div>
<div class="" style="left:286px;top:474px;width:1px;height:16px;background:#fff"></div>
<div class="" style="left:379px;top:474px;width:1px;height:17px;background:#a6a6a6"></div>
<div class="" style="left:380px;top:473px;width:1px;height:19px;background:#696969"></div>
<div class="" style="left:381px;top:474px;width:1px;height:16px;background:#fff"></div>
<div class="" style="left:474px;top:474px;width:1px;height:17px;background:#a6a6a6"></div>
<div class="" style="left:475px;top:473px;width:1px;height:19px;background:#696969"></div>
<div class="" style="left:476px;top:474px;width:1px;height:16px;background:#fff"></div>
<div class="" style="left:569px;top:474px;width:1px;height:17px;background:#a6a6a6"></div>
<div class="" style="left:570px;top:473px;width:1px;height:19px;background:#696969"></div>
<div class="" style="left:571px;top:474px;width:1px;height:16px;background:#fff"></div>
<div class="" style="left:664px;top:474px;width:1px;height:17px;background:#a6a6a6"></div>
<div class="" style="left:665px;top:473px;width:1px;height:19px;background:#696969"></div>
<div class="" style="left:666px;top:474px;width:1px;height:16px;background:#fff"></div>
<div class="" style="left:759px;top:474px;width:1px;height:17px;background:#a6a6a6"></div>
<div class="" style="left:760px;top:473px;width:1px;height:19px;background:#696969"></div>
<div class="" style="left:761px;top:474px;width:1px;height:16px;background:#fff"></div>
<div class="" style="left:854px;top:474px;width:1px;height:17px;background:#a6a6a6"></div>
<div class="" style="left:855px;top:473px;width:1px;height:19px;background:#696969"></div>
<div class="" style="left:856px;top:474px;width:1px;height:16px;background:#fff"></div>
<span class="t " style="left:11.8px;top:475px;font-size:12px;color:#000;letter-spacing:-0.3px;"><span class="c">序号</span></span>
<span class="t " style="left:66.6px;top:475px;font-size:12px;color:#000;letter-spacing:-0.3px;"><span class="c">名称</span></span>
<span class="t " style="left:196.6px;top:475px;font-size:12px;color:#000;letter-spacing:-0.3px;">A<span class="c">相</span></span>
<span class="t " style="left:291.6px;top:475px;font-size:12px;color:#000;letter-spacing:-0.3px;">B<span class="c">相</span></span>
<span class="t " style="left:386.6px;top:475px;font-size:12px;color:#000;letter-spacing:-0.3px;">C<span class="c">相</span></span>
<span class="t " style="left:481.6px;top:475px;font-size:12px;color:#000;letter-spacing:-0.3px;">a<span class="c">相</span></span>
<span class="t " style="left:576.6px;top:475px;font-size:12px;color:#000;letter-spacing:-0.3px;">b<span class="c">相</span></span>
<span class="t " style="left:671.6px;top:475px;font-size:12px;color:#000;letter-spacing:-0.3px;">c<span class="c">相</span></span>
<span class="t " style="left:766.6px;top:475px;font-size:12px;color:#000;letter-spacing:-0.3px;">X<span class="c">相</span></span>
<span class="t " style="left:861.6px;top:475px;font-size:12px;color:#000;letter-spacing:-0.3px;">Y<span class="c">相</span></span>
<div class="" style="left:6px;top:492px;width:934px;height:1px;background:#f8f8f8"></div>
<div class="" style="left:6px;top:493px;width:934px;height:16px;background:#f8f8f8"></div>
<span class="t " style="left:13.5px;top:494px;font-size:12px;color:#000;letter-spacing:-0.3px;">1</span>
<span class="t " style="left:67px;top:494px;font-size:11px;color:#000;letter-spacing:-0.3px;"><span class="c">功率因数</span></span>
<span class="t " style="left:197px;top:494px;font-size:12px;color:#000;letter-spacing:-0.7px;">1.000</span>
<span class="t " style="left:292px;top:494px;font-size:12px;color:#000;letter-spacing:-0.7px;">1.000</span>
<span class="t " style="left:387px;top:494px;font-size:12px;color:#000;letter-spacing:-0.7px;">1.000</span>
<span class="t " style="left:482px;top:494px;font-size:12px;color:#000;letter-spacing:-0.7px;">1.000</span>
<span class="t " style="left:577px;top:494px;font-size:12px;color:#000;letter-spacing:-0.7px;">1.000</span>
<span class="t " style="left:672px;top:494px;font-size:12px;color:#000;letter-spacing:-0.7px;">1.000</span>
<span class="t " style="left:767px;top:494px;font-size:12px;color:#000;letter-spacing:-0.7px;">1.000</span>
<span class="t " style="left:862px;top:494px;font-size:12px;color:#000;letter-spacing:-0.7px;">1.000</span>
<div class="" style="left:6px;top:509px;width:934px;height:16px;background:#e9f6f6"></div>
<span class="t " style="left:13.5px;top:510px;font-size:12px;color:#000;letter-spacing:-0.3px;">2</span>
<span class="t " style="left:67px;top:510px;font-size:11px;color:#000;letter-spacing:-0.3px;"><span class="c">有功功率</span>(W)</span>
<span class="t " style="left:197px;top:510px;font-size:12px;color:#000;letter-spacing:-0.7px;">57.735</span>
<span class="t " style="left:292px;top:510px;font-size:12px;color:#000;letter-spacing:-0.7px;">57.735</span>
<span class="t " style="left:387px;top:510px;font-size:12px;color:#000;letter-spacing:-0.7px;">57.735</span>
<span class="t " style="left:482px;top:510px;font-size:12px;color:#000;letter-spacing:-0.7px;">57.735</span>
<span class="t " style="left:577px;top:510px;font-size:12px;color:#000;letter-spacing:-0.7px;">57.735</span>
<span class="t " style="left:672px;top:510px;font-size:12px;color:#000;letter-spacing:-0.7px;">57.735</span>
<span class="t " style="left:767px;top:510px;font-size:12px;color:#000;letter-spacing:-0.7px;">0.000</span>
<span class="t " style="left:862px;top:510px;font-size:12px;color:#000;letter-spacing:-0.7px;">0.000</span>
<div class="" style="left:6px;top:525px;width:934px;height:16px;background:#f8f8f8"></div>
<span class="t " style="left:13.5px;top:526px;font-size:12px;color:#000;letter-spacing:-0.3px;">3</span>
<span class="t " style="left:67px;top:526px;font-size:11px;color:#000;letter-spacing:-0.3px;"><span class="c">无功功率</span>(Var)</span>
<span class="t " style="left:197px;top:526px;font-size:12px;color:#000;letter-spacing:-0.7px;">0.000</span>
<span class="t " style="left:292px;top:526px;font-size:12px;color:#000;letter-spacing:-0.7px;">0.000</span>
<span class="t " style="left:387px;top:526px;font-size:12px;color:#000;letter-spacing:-0.7px;">0.000</span>
<span class="t " style="left:482px;top:526px;font-size:12px;color:#000;letter-spacing:-0.7px;">0.000</span>
<span class="t " style="left:577px;top:526px;font-size:12px;color:#000;letter-spacing:-0.7px;">0.000</span>
<span class="t " style="left:672px;top:526px;font-size:12px;color:#000;letter-spacing:-0.7px;">0.000</span>
<span class="t " style="left:767px;top:526px;font-size:12px;color:#000;letter-spacing:-0.7px;">0.000</span>
<span class="t " style="left:862px;top:526px;font-size:12px;color:#000;letter-spacing:-0.7px;">0.000</span>
<div class="" style="left:6px;top:541px;width:934px;height:16px;background:#e9f6f6"></div>
<span class="t " style="left:13.5px;top:542px;font-size:12px;color:#000;letter-spacing:-0.3px;">4</span>
<span class="t " style="left:67px;top:542px;font-size:11px;color:#000;letter-spacing:-0.3px;"><span class="c">视在功率</span>(VA)</span>
<span class="t " style="left:197px;top:542px;font-size:12px;color:#000;letter-spacing:-0.7px;">57.735</span>
<span class="t " style="left:292px;top:542px;font-size:12px;color:#000;letter-spacing:-0.7px;">57.735</span>
<span class="t " style="left:387px;top:542px;font-size:12px;color:#000;letter-spacing:-0.7px;">57.735</span>
<span class="t " style="left:482px;top:542px;font-size:12px;color:#000;letter-spacing:-0.7px;">57.735</span>
<span class="t " style="left:577px;top:542px;font-size:12px;color:#000;letter-spacing:-0.7px;">57.735</span>
<span class="t " style="left:672px;top:542px;font-size:12px;color:#000;letter-spacing:-0.7px;">57.735</span>
<span class="t " style="left:767px;top:542px;font-size:12px;color:#000;letter-spacing:-0.7px;">0.000</span>
<span class="t " style="left:862px;top:542px;font-size:12px;color:#000;letter-spacing:-0.7px;">0.000</span>
<div class="" style="left:6px;top:557px;width:934px;height:1px;background:#ececec"></div>
<div class="" style="left:6px;top:573px;width:934px;height:1px;background:#ececec"></div>
<div class="" style="left:6px;top:589px;width:934px;height:1px;background:#ececec"></div>
<div class="" style="left:6px;top:605px;width:934px;height:1px;background:#ececec"></div>
<div class="" style="left:6px;top:621px;width:934px;height:1px;background:#ececec"></div>
<div class="" style="left:6px;top:637px;width:934px;height:1px;background:#ececec"></div>
<div class="" style="left:6px;top:653px;width:934px;height:1px;background:#ececec"></div>
<div class="" style="left:6px;top:669px;width:934px;height:1px;background:#ececec"></div>
<div class="" style="left:6px;top:685px;width:934px;height:1px;background:#ececec"></div>
<div class="" style="left:6px;top:701px;width:934px;height:1px;background:#ececec"></div>
<div class="" style="left:61px;top:493px;width:1px;height:217px;background:rgba(225,225,225,.55)"></div>
<div class="" style="left:191px;top:493px;width:1px;height:217px;background:rgba(225,225,225,.55)"></div>
<div class="" style="left:286px;top:493px;width:1px;height:217px;background:rgba(225,225,225,.55)"></div>
<div class="" style="left:381px;top:493px;width:1px;height:217px;background:rgba(225,225,225,.55)"></div>
<div class="" style="left:476px;top:493px;width:1px;height:217px;background:rgba(225,225,225,.55)"></div>
<div class="" style="left:571px;top:493px;width:1px;height:217px;background:rgba(225,225,225,.55)"></div>
<div class="" style="left:666px;top:493px;width:1px;height:217px;background:rgba(225,225,225,.55)"></div>
<div class="" style="left:761px;top:493px;width:1px;height:217px;background:rgba(225,225,225,.55)"></div>
<div class="" style="left:856px;top:493px;width:1px;height:217px;background:rgba(225,225,225,.55)"></div>
<div class="" style="left:6px;top:710px;width:934px;height:16px;background:#f0f0f0"></div>
<div class="" style="left:23px;top:717px;width:718px;height:2px;background:#858585"></div>
<div class="" style="left:940px;top:471px;width:3px;height:255px;background:#fff"></div>
<div class="" style="left:941px;top:92px;width:1px;height:373px;background:#e6e6e6"></div>
<div class="" style="left:942px;top:90px;width:5px;height:656px;background:#bfdbff;border-left:1px solid #fff"></div>
<div class="" style="left:947px;top:90px;width:330px;height:22px;background:#fff;border-top:2px solid #767676;border-left:2px solid #767676;border-bottom:1px solid #e8e8e8"></div>
<div class="" style="left:1258px;top:92px;width:17px;height:19px;background:#f0f0f0;border-top:1px solid #fff;border-left:1px solid #fff;border-right:2px solid #767676;border-bottom:2px solid #767676"></div>
<svg class="ic" style="left:1262px;top:99px" width="9" height="5"><path d="M0.5 0.5H8.5L4.5 4.5z"/></svg>
<span class="t " style="left:951px;top:94px;font-size:12px;color:#000;"><span class="c">按相分量步长变化</span></span>
<div class="" style="left:947px;top:112px;width:330px;height:25px;background:linear-gradient(#e4efff 0,#d8e7fd 35%,#c0d8fb 70%,#aacbfa 100%)"></div>
<div class="" style="left:947px;top:137px;width:330px;height:250px;background:#000"></div>
<svg class="ic" style="left:947px;top:137px" width="330" height="250" viewBox="947 137 330 250" shape-rendering="crispEdges"><g fill="none" stroke="#fff" stroke-width="1"><circle cx="1116.5" cy="262.5" r="106.5" shape-rendering="auto" stroke-width="1.1"/><circle cx="1116.5" cy="262.5" r="15" stroke-dasharray="3.5 3" stroke-width=".9" shape-rendering="auto"/><circle cx="1116.5" cy="262.5" r="38" stroke-dasharray="3.5 3" stroke-width=".9" shape-rendering="auto"/><circle cx="1116.5" cy="262.5" r="61" stroke-dasharray="3.5 3" stroke-width=".9" shape-rendering="auto"/><circle cx="1116.5" cy="262.5" r="84" stroke-dasharray="3.5 3" stroke-width=".9" shape-rendering="auto"/><path d="M1116.5 262.5L1208.3 209.5" stroke-dasharray="4 3" shape-rendering="auto"/><path d="M1116.5 262.5L1169.5 170.701" stroke-dasharray="4 3" shape-rendering="auto"/><path d="M1116.5 262.5L1063.5 170.701" stroke-dasharray="4 3" shape-rendering="auto"/><path d="M1116.5 262.5L1024.7 209.5" stroke-dasharray="4 3" shape-rendering="auto"/><path d="M1116.5 262.5L1024.7 315.5" stroke-dasharray="4 3" shape-rendering="auto"/><path d="M1116.5 262.5L1063.5 354.299" stroke-dasharray="4 3" shape-rendering="auto"/><path d="M1116.5 262.5L1169.5 354.299" stroke-dasharray="4 3" shape-rendering="auto"/><path d="M1116.5 262.5L1208.3 315.5" stroke-dasharray="4 3" shape-rendering="auto"/><path d="M1010.5 262.5H1222.5 M1116.5 156.5V368.5" stroke-width="1"/><path d="M1131.5 261v3M1101.5 261v3M1115 247.5h3M1115 277.5h3"/><path d="M1154.5 261v3M1078.5 261v3M1115 224.5h3M1115 300.5h3"/><path d="M1177.5 261v3M1055.5 261v3M1115 201.5h3M1115 323.5h3"/><path d="M1200.5 261v3M1032.5 261v3M1115 178.5h3M1115 346.5h3"/></g><path d="M1116.5 262.5L1167.5 262.5M1167.5 262.5L1161.16 259.542M1167.5 262.5L1161.16 265.458" stroke="#ffff00" stroke-width="1.4" fill="none" shape-rendering="auto"/><path d="M1116.5 262.5L1091 218.333M1091 218.333L1091.61 225.306M1091 218.333L1096.73 222.348" stroke="#ff1048" stroke-width="1.4" fill="none" shape-rendering="auto"/><path d="M1116.5 262.5L1091 306.667M1091 306.667L1096.73 302.652M1091 306.667L1091.61 299.694" stroke="#00f040" stroke-width="1.4" fill="none" shape-rendering="auto"/><path d="M1116.5 262.5L1116.5 254.5" stroke="#00e0e0" stroke-width="1.4" fill="none" shape-rendering="auto"/><path d="M1116.5 262.5L1123.43 258.5" stroke="#00e0e0" stroke-width="1.4" fill="none" shape-rendering="auto"/><path d="M1116.5 262.5L1116.5 270.5" stroke="#ff30ff" stroke-width="1.4" fill="none" shape-rendering="auto"/><path d="M1116.5 262.5L1123.43 266.5" stroke="#ff30ff" stroke-width="1.4" fill="none" shape-rendering="auto"/><path d="M1116.5 262.5L1109.57 258.5" stroke="#e0a000" stroke-width="1.4" fill="none" shape-rendering="auto"/><path d="M1116.5 262.5L1109.57 266.5" stroke="#e0a000" stroke-width="1.4" fill="none" shape-rendering="auto"/></svg>
<span class="t " style="left:1108.5px;top:142px;font-size:10px;color:#fff;letter-spacing:-0.3px;">+90</span>
<span class="t " style="left:1108.3px;top:369px;font-size:10px;color:#fff;letter-spacing:-0.3px;">−90</span>
<span class="t " style="left:987px;top:255px;font-size:10px;color:#fff;letter-spacing:-0.3px;">180</span>
<span class="t " style="left:1225px;top:255px;font-size:10px;color:#fff;">0</span>
<div class="" style="left:947px;top:387px;width:330px;height:359px;background:#fff"></div>
<div class="" style="left:947px;top:387px;width:330px;height:19px;background:#f0f0f0;border-bottom:1px solid #696969;box-shadow:inset 0 -1px 0 #a6a6a6"></div>
<div class="" style="left:947px;top:406px;width:301px;height:2px;background:#f8f8f8"></div>
<div class="" style="left:1000px;top:388px;width:1px;height:17px;background:#a6a6a6"></div>
<div class="" style="left:1001px;top:387px;width:1px;height:19px;background:#696969"></div>
<div class="" style="left:1002px;top:388px;width:1px;height:16px;background:#fff"></div>
<div class="" style="left:1082px;top:388px;width:1px;height:17px;background:#a6a6a6"></div>
<div class="" style="left:1083px;top:387px;width:1px;height:19px;background:#696969"></div>
<div class="" style="left:1084px;top:388px;width:1px;height:16px;background:#fff"></div>
<div class="" style="left:1164px;top:388px;width:1px;height:17px;background:#a6a6a6"></div>
<div class="" style="left:1165px;top:387px;width:1px;height:19px;background:#696969"></div>
<div class="" style="left:1166px;top:388px;width:1px;height:16px;background:#fff"></div>
<div class="" style="left:1246px;top:388px;width:1px;height:17px;background:#a6a6a6"></div>
<div class="" style="left:1247px;top:387px;width:1px;height:19px;background:#696969"></div>
<div class="" style="left:1248px;top:388px;width:1px;height:16px;background:#fff"></div>
<span class="t " style="left:1007px;top:388px;font-size:12px;color:#000;"><span class="c">幅值步长</span></span>
<span class="t " style="left:1089px;top:388px;font-size:12px;color:#000;"><span class="c">相位步长</span></span>
<span class="t " style="left:1171px;top:388px;font-size:12px;color:#000;"><span class="c">频率步长</span></span>
<div class="" style="left:947px;top:408px;width:301px;height:17px;background:#f8f8f8"></div>
<div class="" style="left:947px;top:408px;width:18px;height:17px;background:#fff"></div>
<div class="" style="left:951px;top:410px;width:13px;height:13px;background:#fff;border:2px solid #808080"></div>
<span class="t " style="left:967.5px;top:409px;font-size:12px;color:#000;letter-spacing:-0.6px;">UA</span>
<span class="t " style="left:1008.5px;top:409px;font-size:12px;color:#000;letter-spacing:-0.7px;">1.000</span>
<span class="t " style="left:1090px;top:409px;font-size:12px;color:#000;letter-spacing:-0.7px;">0.00</span>
<span class="t " style="left:1172px;top:409px;font-size:12px;color:#000;letter-spacing:-0.7px;">0.000</span>
<div class="" style="left:947px;top:425px;width:301px;height:17px;background:#e9f6f6"></div>
<div class="" style="left:947px;top:425px;width:18px;height:17px;background:#fff"></div>
<div class="" style="left:951px;top:427px;width:13px;height:13px;background:#fff;border:2px solid #808080"></div>
<span class="t " style="left:967.5px;top:426px;font-size:12px;color:#000;letter-spacing:-0.6px;">UB</span>
<span class="t " style="left:1008.5px;top:426px;font-size:12px;color:#000;letter-spacing:-0.7px;">1.000</span>
<span class="t " style="left:1090px;top:426px;font-size:12px;color:#000;letter-spacing:-0.7px;">0.00</span>
<span class="t " style="left:1172px;top:426px;font-size:12px;color:#000;letter-spacing:-0.7px;">0.000</span>
<div class="" style="left:947px;top:442px;width:301px;height:17px;background:#f8f8f8"></div>
<div class="" style="left:947px;top:442px;width:18px;height:17px;background:#fff"></div>
<div class="" style="left:951px;top:444px;width:13px;height:13px;background:#fff;border:2px solid #808080"></div>
<span class="t " style="left:967.5px;top:443px;font-size:12px;color:#000;letter-spacing:-0.6px;">UC</span>
<span class="t " style="left:1008.5px;top:443px;font-size:12px;color:#000;letter-spacing:-0.7px;">1.000</span>
<span class="t " style="left:1090px;top:443px;font-size:12px;color:#000;letter-spacing:-0.7px;">0.00</span>
<span class="t " style="left:1172px;top:443px;font-size:12px;color:#000;letter-spacing:-0.7px;">0.000</span>
<div class="" style="left:947px;top:459px;width:301px;height:17px;background:#e9f6f6"></div>
<div class="" style="left:947px;top:459px;width:18px;height:17px;background:#fff"></div>
<div class="" style="left:951px;top:461px;width:13px;height:13px;background:#fff;border:2px solid #808080"></div>
<span class="t " style="left:967.5px;top:460px;font-size:12px;color:#000;letter-spacing:-0.6px;">Ua</span>
<span class="t " style="left:1008.5px;top:460px;font-size:12px;color:#000;letter-spacing:-0.7px;">1.000</span>
<span class="t " style="left:1090px;top:460px;font-size:12px;color:#000;letter-spacing:-0.7px;">0.00</span>
<span class="t " style="left:1172px;top:460px;font-size:12px;color:#000;letter-spacing:-0.7px;">0.000</span>
<div class="" style="left:947px;top:476px;width:301px;height:17px;background:#f8f8f8"></div>
<div class="" style="left:947px;top:476px;width:18px;height:17px;background:#fff"></div>
<div class="" style="left:951px;top:478px;width:13px;height:13px;background:#fff;border:2px solid #808080"></div>
<span class="t " style="left:967.5px;top:477px;font-size:12px;color:#000;letter-spacing:-0.6px;">Ub</span>
<span class="t " style="left:1008.5px;top:477px;font-size:12px;color:#000;letter-spacing:-0.7px;">1.000</span>
<span class="t " style="left:1090px;top:477px;font-size:12px;color:#000;letter-spacing:-0.7px;">0.00</span>
<span class="t " style="left:1172px;top:477px;font-size:12px;color:#000;letter-spacing:-0.7px;">0.000</span>
<div class="" style="left:947px;top:493px;width:301px;height:17px;background:#e9f6f6"></div>
<div class="" style="left:947px;top:493px;width:18px;height:17px;background:#fff"></div>
<div class="" style="left:951px;top:495px;width:13px;height:13px;background:#fff;border:2px solid #808080"></div>
<span class="t " style="left:967.5px;top:494px;font-size:12px;color:#000;letter-spacing:-0.6px;">Uc</span>
<span class="t " style="left:1008.5px;top:494px;font-size:12px;color:#000;letter-spacing:-0.7px;">1.000</span>
<span class="t " style="left:1090px;top:494px;font-size:12px;color:#000;letter-spacing:-0.7px;">0.00</span>
<span class="t " style="left:1172px;top:494px;font-size:12px;color:#000;letter-spacing:-0.7px;">0.000</span>
<div class="" style="left:947px;top:510px;width:301px;height:17px;background:#f8f8f8"></div>
<div class="" style="left:947px;top:510px;width:18px;height:17px;background:#fff"></div>
<div class="" style="left:951px;top:512px;width:13px;height:13px;background:#fff;border:2px solid #808080"></div>
<span class="t " style="left:967.5px;top:511px;font-size:12px;color:#000;letter-spacing:-0.6px;">UX</span>
<span class="t " style="left:1008.5px;top:511px;font-size:12px;color:#000;letter-spacing:-0.7px;">1.000</span>
<span class="t " style="left:1090px;top:511px;font-size:12px;color:#000;letter-spacing:-0.7px;">0.00</span>
<span class="t " style="left:1172px;top:511px;font-size:12px;color:#000;letter-spacing:-0.7px;">0.000</span>
<div class="" style="left:947px;top:527px;width:301px;height:17px;background:#e9f6f6"></div>
<div class="" style="left:947px;top:527px;width:18px;height:17px;background:#fff"></div>
<div class="" style="left:951px;top:529px;width:13px;height:13px;background:#fff;border:2px solid #808080"></div>
<span class="t " style="left:967.5px;top:528px;font-size:12px;color:#000;letter-spacing:-0.6px;">UY</span>
<span class="t " style="left:1008.5px;top:528px;font-size:12px;color:#000;letter-spacing:-0.7px;">1.000</span>
<span class="t " style="left:1090px;top:528px;font-size:12px;color:#000;letter-spacing:-0.7px;">0.00</span>
<span class="t " style="left:1172px;top:528px;font-size:12px;color:#000;letter-spacing:-0.7px;">0.000</span>
<div class="" style="left:947px;top:544px;width:301px;height:17px;background:#f8f8f8"></div>
<div class="" style="left:947px;top:544px;width:18px;height:17px;background:#fff"></div>
<div class="" style="left:951px;top:546px;width:13px;height:13px;background:#fff;border:2px solid #808080"></div>
<span class="t " style="left:967.5px;top:545px;font-size:12px;color:#000;letter-spacing:-0.6px;">UZ</span>
<span class="t " style="left:1008.5px;top:545px;font-size:12px;color:#000;letter-spacing:-0.7px;">1.000</span>
<span class="t " style="left:1090px;top:545px;font-size:12px;color:#000;letter-spacing:-0.7px;">0.00</span>
<span class="t " style="left:1172px;top:545px;font-size:12px;color:#000;letter-spacing:-0.7px;">0.000</span>
<div class="" style="left:947px;top:561px;width:301px;height:17px;background:#e9f6f6"></div>
<div class="" style="left:947px;top:561px;width:18px;height:17px;background:#fff"></div>
<div class="" style="left:951px;top:563px;width:13px;height:13px;background:#fff;border:2px solid #808080"></div>
<span class="t " style="left:967.5px;top:562px;font-size:12px;color:#000;letter-spacing:-0.6px;">IA</span>
<span class="t " style="left:1008.5px;top:562px;font-size:12px;color:#000;letter-spacing:-0.7px;">0.100</span>
<span class="t " style="left:1090px;top:562px;font-size:12px;color:#000;letter-spacing:-0.7px;">0.00</span>
<span class="t " style="left:1172px;top:562px;font-size:12px;color:#000;letter-spacing:-0.7px;">0.000</span>
<div class="" style="left:947px;top:578px;width:301px;height:17px;background:#f8f8f8"></div>
<div class="" style="left:947px;top:578px;width:18px;height:17px;background:#fff"></div>
<div class="" style="left:951px;top:580px;width:13px;height:13px;background:#fff;border:2px solid #808080"></div>
<span class="t " style="left:967.5px;top:579px;font-size:12px;color:#000;letter-spacing:-0.6px;">IB</span>
<span class="t " style="left:1008.5px;top:579px;font-size:12px;color:#000;letter-spacing:-0.7px;">0.100</span>
<span class="t " style="left:1090px;top:579px;font-size:12px;color:#000;letter-spacing:-0.7px;">0.00</span>
<span class="t " style="left:1172px;top:579px;font-size:12px;color:#000;letter-spacing:-0.7px;">0.000</span>
<div class="" style="left:947px;top:595px;width:301px;height:17px;background:#e9f6f6"></div>
<div class="" style="left:947px;top:595px;width:18px;height:17px;background:#fff"></div>
<div class="" style="left:951px;top:597px;width:13px;height:13px;background:#fff;border:2px solid #808080"></div>
<span class="t " style="left:967.5px;top:596px;font-size:12px;color:#000;letter-spacing:-0.6px;">IC</span>
<span class="t " style="left:1008.5px;top:596px;font-size:12px;color:#000;letter-spacing:-0.7px;">0.100</span>
<span class="t " style="left:1090px;top:596px;font-size:12px;color:#000;letter-spacing:-0.7px;">0.00</span>
<span class="t " style="left:1172px;top:596px;font-size:12px;color:#000;letter-spacing:-0.7px;">0.000</span>
<div class="" style="left:947px;top:612px;width:301px;height:17px;background:#f8f8f8"></div>
<div class="" style="left:947px;top:612px;width:18px;height:17px;background:#fff"></div>
<div class="" style="left:951px;top:614px;width:13px;height:13px;background:#fff;border:2px solid #808080"></div>
<span class="t " style="left:967.5px;top:613px;font-size:12px;color:#000;letter-spacing:-0.6px;">Ia</span>
<span class="t " style="left:1008.5px;top:613px;font-size:12px;color:#000;letter-spacing:-0.7px;">0.100</span>
<span class="t " style="left:1090px;top:613px;font-size:12px;color:#000;letter-spacing:-0.7px;">0.00</span>
<span class="t " style="left:1172px;top:613px;font-size:12px;color:#000;letter-spacing:-0.7px;">0.000</span>
<div class="" style="left:947px;top:629px;width:301px;height:17px;background:#e9f6f6"></div>
<div class="" style="left:947px;top:629px;width:18px;height:17px;background:#fff"></div>
<div class="" style="left:951px;top:631px;width:13px;height:13px;background:#fff;border:2px solid #808080"></div>
<span class="t " style="left:967.5px;top:630px;font-size:12px;color:#000;letter-spacing:-0.6px;">Ib</span>
<span class="t " style="left:1008.5px;top:630px;font-size:12px;color:#000;letter-spacing:-0.7px;">0.100</span>
<span class="t " style="left:1090px;top:630px;font-size:12px;color:#000;letter-spacing:-0.7px;">0.00</span>
<span class="t " style="left:1172px;top:630px;font-size:12px;color:#000;letter-spacing:-0.7px;">0.000</span>
<div class="" style="left:947px;top:646px;width:301px;height:17px;background:#f8f8f8"></div>
<div class="" style="left:947px;top:646px;width:18px;height:17px;background:#fff"></div>
<div class="" style="left:951px;top:648px;width:13px;height:13px;background:#fff;border:2px solid #808080"></div>
<span class="t " style="left:967.5px;top:647px;font-size:12px;color:#000;letter-spacing:-0.6px;">Ic</span>
<span class="t " style="left:1008.5px;top:647px;font-size:12px;color:#000;letter-spacing:-0.7px;">0.100</span>
<span class="t " style="left:1090px;top:647px;font-size:12px;color:#000;letter-spacing:-0.7px;">0.00</span>
<span class="t " style="left:1172px;top:647px;font-size:12px;color:#000;letter-spacing:-0.7px;">0.000</span>
<div class="" style="left:947px;top:663px;width:301px;height:17px;background:#e9f6f6"></div>
<div class="" style="left:947px;top:663px;width:18px;height:17px;background:#fff"></div>
<div class="" style="left:951px;top:665px;width:13px;height:13px;background:#fff;border:2px solid #808080"></div>
<span class="t " style="left:967.5px;top:664px;font-size:12px;color:#000;letter-spacing:-0.6px;">IX</span>
<span class="t " style="left:1008.5px;top:664px;font-size:12px;color:#000;letter-spacing:-0.7px;">0.100</span>
<span class="t " style="left:1090px;top:664px;font-size:12px;color:#000;letter-spacing:-0.7px;">0.00</span>
<span class="t " style="left:1172px;top:664px;font-size:12px;color:#000;letter-spacing:-0.7px;">0.000</span>
<div class="" style="left:947px;top:680px;width:301px;height:17px;background:#f8f8f8"></div>
<div class="" style="left:947px;top:680px;width:18px;height:17px;background:#fff"></div>
<div class="" style="left:951px;top:682px;width:13px;height:13px;background:#fff;border:2px solid #808080"></div>
<span class="t " style="left:967.5px;top:681px;font-size:12px;color:#000;letter-spacing:-0.6px;">IY</span>
<span class="t " style="left:1008.5px;top:681px;font-size:12px;color:#000;letter-spacing:-0.7px;">0.100</span>
<span class="t " style="left:1090px;top:681px;font-size:12px;color:#000;letter-spacing:-0.7px;">0.00</span>
<span class="t " style="left:1172px;top:681px;font-size:12px;color:#000;letter-spacing:-0.7px;">0.000</span>
<div class="" style="left:947px;top:697px;width:301px;height:17px;background:#e9f6f6"></div>
<div class="" style="left:947px;top:697px;width:18px;height:17px;background:#fff"></div>
<div class="" style="left:951px;top:699px;width:13px;height:13px;background:#fff;border:2px solid #808080"></div>
<span class="t " style="left:967.5px;top:698px;font-size:12px;color:#000;letter-spacing:-0.6px;">IZ</span>
<span class="t " style="left:1008.5px;top:698px;font-size:12px;color:#000;letter-spacing:-0.7px;">0.100</span>
<span class="t " style="left:1090px;top:698px;font-size:12px;color:#000;letter-spacing:-0.7px;">0.00</span>
<span class="t " style="left:1172px;top:698px;font-size:12px;color:#000;letter-spacing:-0.7px;">0.000</span>
<div class="" style="left:947px;top:424px;width:330px;height:1px;background:rgba(240,240,240,.8)"></div>
<div class="" style="left:947px;top:441px;width:330px;height:1px;background:rgba(240,240,240,.8)"></div>
<div class="" style="left:947px;top:458px;width:330px;height:1px;background:rgba(240,240,240,.8)"></div>
<div class="" style="left:947px;top:475px;width:330px;height:1px;background:rgba(240,240,240,.8)"></div>
<div class="" style="left:947px;top:492px;width:330px;height:1px;background:rgba(240,240,240,.8)"></div>
<div class="" style="left:947px;top:509px;width:330px;height:1px;background:rgba(240,240,240,.8)"></div>
<div class="" style="left:947px;top:526px;width:330px;height:1px;background:rgba(240,240,240,.8)"></div>
<div class="" style="left:947px;top:543px;width:330px;height:1px;background:rgba(240,240,240,.8)"></div>
<div class="" style="left:947px;top:560px;width:330px;height:1px;background:rgba(240,240,240,.8)"></div>
<div class="" style="left:947px;top:577px;width:330px;height:1px;background:rgba(240,240,240,.8)"></div>
<div class="" style="left:947px;top:594px;width:330px;height:1px;background:rgba(240,240,240,.8)"></div>
<div class="" style="left:947px;top:611px;width:330px;height:1px;background:rgba(240,240,240,.8)"></div>
<div class="" style="left:947px;top:628px;width:330px;height:1px;background:rgba(240,240,240,.8)"></div>
<div class="" style="left:947px;top:645px;width:330px;height:1px;background:rgba(240,240,240,.8)"></div>
<div class="" style="left:947px;top:662px;width:330px;height:1px;background:rgba(240,240,240,.8)"></div>
<div class="" style="left:947px;top:679px;width:330px;height:1px;background:rgba(240,240,240,.8)"></div>
<div class="" style="left:947px;top:696px;width:330px;height:1px;background:rgba(240,240,240,.8)"></div>
<div class="" style="left:947px;top:713px;width:330px;height:1px;background:#ececec"></div>
<div class="" style="left:947px;top:730px;width:330px;height:1px;background:#ececec"></div>
<div class="" style="left:1002px;top:408px;width:1px;height:338px;background:rgba(225,225,225,.55)"></div>
<div class="" style="left:1084px;top:408px;width:1px;height:338px;background:rgba(225,225,225,.55)"></div>
<div class="" style="left:1166px;top:408px;width:1px;height:338px;background:rgba(225,225,225,.55)"></div>
<div class="" style="left:1248px;top:408px;width:1px;height:338px;background:rgba(225,225,225,.55)"></div>
<div class="" style="left:3px;top:726px;width:940px;height:20px;background:linear-gradient(#7f9fd5 0,#86a5d9 12%,#8eacde 14%,#9fb9e6 100%)"></div>
<div class="" style="left:6px;top:729px;width:13px;height:13px;background:#d4e3f6"></div>
<div class="" style="left:22px;top:729px;width:13px;height:13px;background:#d4e3f6"></div>
<div class="" style="left:38px;top:729px;width:13px;height:13px;background:#d4e3f6"></div>
<div class="" style="left:54px;top:729px;width:13px;height:13px;background:#d4e3f6"></div>
<svg class="ic" style="left:6px;top:729px" width="64" height="13" fill="#4a72b4"><path d="M3 3h1v7h-1zM9 3v7l-4-3.5z"/><path d="M24 3v7l-4-3.5z"/><path d="M37 3v7l4-3.5z"/><path d="M52 3v7l4-3.5zM57 3h1v7h-1z"/></svg>
<svg class="ic" style="left:0;top:726px" width="400" height="20"><defs><linearGradient id="tg" x1="0" y1="0" x2="0" y2="1"><stop offset="0" stop-color="#eaf2fe"/><stop offset=".36" stop-color="#dbe8fc"/><stop offset=".42" stop-color="#b3cdf5"/><stop offset=".62" stop-color="#c2d8f8"/><stop offset="1" stop-color="#e8f1fe"/></linearGradient></defs>
<path d="M205.5 1V14Q205.5 16.5 208.5 16.5H272L286.5 1z" fill="url(#tg)" stroke="#fff" stroke-width="1"/><path d="M273 16.8L287.5 1" stroke="#6c8ccc" stroke-width="1" fill="none"/>
<path d="M132.5 1V14Q132.5 16.5 135.5 16.5H198L212.5 1z" fill="url(#tg)" stroke="#fff" stroke-width="1"/><path d="M199 16.8L213.5 1" stroke="#6c8ccc" stroke-width="1" fill="none"/>
<path d="M71.5 1V14Q71.5 16.5 74.5 16.5H125L139.5 1z" fill="url(#tg)" stroke="#fff" stroke-width="1"/><path d="M126 16.8L140.5 1" stroke="#6c8ccc" stroke-width="1" fill="none"/>
<path d="M278.5 1V14Q278.5 16.5 281.5 16.5H332L346.5 1z" fill="#fff" stroke="#fff" stroke-width="1"/><path d="M333 16.8L347.5 1" stroke="#6c8ccc" stroke-width="1" fill="none"/>
</svg>
<span class="t " style="left:82px;top:727px;font-size:12px;color:#000;"><span style="font-size:11px">测试结果</span></span>
<span class="t " style="left:144px;top:727px;font-size:12px;color:#000;"><span style="font-size:11px">序分量显示</span></span>
<span class="t " style="left:217px;top:727px;font-size:12px;color:#000;"><span style="font-size:11px">线分量显示</span></span>
<span class="t " style="left:287px;top:727px;font-size:12px;color:#000;"><span style="font-size:11.6px;font-weight:bold">功率显示</span></span>
<div class="" style="left:0px;top:746px;width:1280px;height:20px;background:linear-gradient(#6488c8 0,#6488c8 1px,#f0f6ff 1px,#dce9fd 2.5px,#cfe0fb 8px,#b3cef6 9px,#b9d2f7 13px,#c4dafa 19px)"></div>
<span class="t " style="left:7px;top:749px;font-size:12px;color:#1e3a8e;"><span class="c">就绪</span></span>
<div class="" style="left:210px;top:749px;width:1px;height:15px;background:#8aa8dc"></div>
<div class="" style="left:211px;top:749px;width:1px;height:15px;background:#e8f1ff"></div>
<div class="" style="left:291px;top:749px;width:1px;height:15px;background:#8aa8dc"></div>
<div class="" style="left:292px;top:749px;width:1px;height:15px;background:#e8f1ff"></div>
<div class="" style="left:387px;top:749px;width:1px;height:15px;background:#8aa8dc"></div>
<div class="" style="left:388px;top:749px;width:1px;height:15px;background:#e8f1ff"></div>
<div class="" style="left:513px;top:749px;width:1px;height:15px;background:#8aa8dc"></div>
<div class="" style="left:514px;top:749px;width:1px;height:15px;background:#e8f1ff"></div>
<span class="t " style="left:215px;top:749px;font-size:12px;color:#1e3a8e;"><span class="c">运行时间</span></span>
<span class="t " style="left:296px;top:748px;font-size:12px;color:#1e3a8e;letter-spacing:-0.9px;">0.000s</span>
<span class="t " style="left:392px;top:749px;font-size:12px;color:#1e3a8e;"><span class="c">开入量状态</span></span>
<span class="t " style="left:516.5px;top:748px;font-size:11px;color:#000;">A</span>
<div class="" style="left:527px;top:751px;width:13.5px;height:13px;border:1px solid #8a8a8a"></div>
<span class="t " style="left:561.5px;top:748px;font-size:11px;color:#000;">B</span>
<div class="" style="left:572px;top:751px;width:13.5px;height:13px;border:1px solid #8a8a8a"></div>
<span class="t " style="left:606.5px;top:748px;font-size:11px;color:#000;">C</span>
<div class="" style="left:617px;top:751px;width:13.5px;height:13px;border:1px solid #8a8a8a"></div>
<span class="t " style="left:651.5px;top:748px;font-size:11px;color:#000;">R</span>
<div class="" style="left:662px;top:751px;width:13.5px;height:13px;border:1px solid #8a8a8a"></div>
<span class="t " style="left:696.5px;top:748px;font-size:11px;color:#000;">a</span>
<div class="" style="left:707px;top:751px;width:13.5px;height:13px;border:1px solid #8a8a8a"></div>
<span class="t " style="left:741.5px;top:748px;font-size:11px;color:#000;">b</span>
<div class="" style="left:752px;top:751px;width:13.5px;height:13px;border:1px solid #8a8a8a"></div>
<span class="t " style="left:786.5px;top:748px;font-size:11px;color:#000;">c</span>
<div class="" style="left:797px;top:751px;width:13.5px;height:13px;border:1px solid #8a8a8a"></div>
<span class="t " style="left:831.5px;top:748px;font-size:11px;color:#000;">r</span>
<div class="" style="left:842px;top:751px;width:13.5px;height:13px;border:1px solid #8a8a8a"></div>
<span class="t " style="left:876.5px;top:748px;font-size:11px;color:#000;">X</span>
<div class="" style="left:887px;top:751px;width:13.5px;height:13px;border:1px solid #8a8a8a"></div>
<span class="t " style="left:921.5px;top:748px;font-size:11px;color:#000;">x</span>
<div class="" style="left:932px;top:751px;width:13.5px;height:13px;border:1px solid #8a8a8a"></div>
<svg class="ic" style="left:6px;top:5px" width="16" height="16" viewBox="0 0 16 16"><defs><radialGradient id="ag" cx=".6" cy=".5" r=".65"><stop offset="0" stop-color="#16c62a"/><stop offset=".55" stop-color="#079a12"/><stop offset="1" stop-color="#005a06"/></radialGradient></defs><rect x="0" y="0" width="16" height="16" rx="1.6" fill="url(#ag)" stroke="#014a06" stroke-width=".8"/><path d="M5 1.2h2.2v1.4h-1l-.4 1h-.8z" fill="#d8f4ff"/><path d="M8.8 1.2h1.4l-.6 2h-1.2z" fill="#fff6d8"/><path d="M12 1.2h3v2.8h-.9v-1.2h-1v1.2h-1.1z" fill="#fff"/><path d="M2 2.2L4 3.2L6.4 5.2L9.8 7.6L8.6 9.2H5.2L4.6 6L3.2 3.8z" fill="#f4e6f4"/><path d="M2.3 7.6Q2.6 9.7 5.2 10.3Q8.4 11 11 9.9Q12.8 9 13 7.5" fill="none" stroke="#ff3200" stroke-width="1.5" stroke-linecap="round"/><path d="M3 10.4L6.6 11.6L10.6 13L13.2 14.4" fill="none" stroke="#fbeefb" stroke-width="1.1"/></svg>
<svg class="ic" style="left:0;top:57px" width="330" height="33" viewBox="0 57 330 33"><defs><pattern id="dots" width="2" height="2" patternUnits="userSpaceOnUse"><rect width="1" height="1" fill="#fff"/><rect x="1" y="1" width="1" height="1" fill="#fff"/></pattern></defs><g shape-rendering="crispEdges"><path d="M20 70h9v3h-5l-4 4z" fill="#ffff00"/><path d="M20 70h9v3h-5l-4 4z" fill="url(#dots)"/><path d="M24 73h10l-4.5 4.5h-10z" fill="#808000"/><path d="M19.5 77.5V68.5M20 68.5h3M23 69.5h7M29.5 70v3M24 72.5h10M19 77.5h11" stroke="#000" stroke-width="1" fill="none"/></g><path d="M34.3 72.6L29.6 77.4M23.8 72.6L19.8 77" stroke="#000" stroke-width="1.2" fill="none"/><path d="M27.3 66.6Q28.4 64.9 30.2 65Q32 65.2 33 67" stroke="#000" stroke-width="1.1" fill="none"/><path d="M34.4 65.6V68.7H31.2z" fill="#000"/><g shape-rendering="crispEdges"><rect x="49" y="66" width="14" height="14" fill="#000"/><rect x="50" y="67" width="12" height="12" fill="#808000"/><rect x="51" y="67" width="1" height="6.5" fill="#000"/><rect x="60" y="67" width="1" height="6.5" fill="#000"/><rect x="52" y="67" width="8" height="6" fill="#e9f1fd"/><rect x="51" y="73" width="10" height=".6" fill="#000"/><rect x="52" y="75" width="8.5" height="4.2" fill="#000"/><rect x="57.7" y="76" width="2" height="2.8" fill="#fff"/><rect x="61" y="67" width="1" height="1" fill="#fff"/></g><path d="M88.5 65.5L98 74.5L88.5 83.5z" fill="#00ff00" stroke="#000" stroke-width="1.1"/><rect x="119" y="68" width="10" height="10" fill="#a0a0a0"/><path d="M161.5 64.3L169.6 72.5H164V83.5H158.5V72.5H153.4z" fill="#00ffff" stroke="#0000ff" stroke-width="1.1"/><path d="M189.5 63.5H194.5V75.5H199.6L191.5 83.7L183.4 75.5H189.5z" fill="#00ffff" stroke="#0000ff" stroke-width="1.1"/><path d="M220.6 62.6H231L236.5 68.6V82.5H220.6z" fill="#fff" stroke="#000" stroke-width="1.2"/><path d="M231 62.6V68.9H236.5" fill="none" stroke="#000" stroke-width="1.2"/><text x="223" y="82.8" font-family="Liberation Serif" font-weight="bold" font-size="13.5" fill="#0000ff" textLength="13" lengthAdjust="spacingAndGlyphs">W</text><g shape-rendering="crispEdges"><rect x="254" y="65" width="14" height="2" fill="#000080"/><rect x="254" y="67" width="1" height="8" fill="#000"/><rect x="267" y="67" width="1" height="10" fill="#000"/><rect x="262" y="76" width="6" height="1" fill="#000"/></g><path d="M254.6 75.6L259.4 71.2M258 71h1.8v2M262 75.2L266 71.9M264.6 71.7h1.7v1.9M255.5 76.6q1.6 -1.2 3.2 0" stroke="#000" stroke-width="1" fill="none"/><rect x="252.3" y="75.6" width="3" height="4" rx="1.3" fill="#00ffff" stroke="#000" stroke-width=".9"/><rect x="258.8" y="75.6" width="3" height="4" rx="1.3" fill="#00ffff" stroke="#000" stroke-width=".9"/><path d="M289 61h19l2 2v19l-2 2h-19l-2-2v-19z" fill="#000"/><g fill="none" stroke-width="1.15" stroke-linejoin="round"><path d="M288.4 78.2L289.5 75L290.5 71L291.5 68.6L292.8 67.6L293.7 69.6" stroke="#ffff00"/><path d="M294.3 70.2L294.7 73L295.3 76L296.8 77.5L298.3 76L299.3 72L300.3 68.6L301.3 67.6L302.3 68.6L302.9 70.6" stroke="#00ee00"/><path d="M303.3 71.3L303.8 74.5L304.8 77L305.5 78.5L306.5 77L307.5 74L308.5 70L309.6 67.8" stroke="#ff0000"/></g></svg>
<svg class="ic" style="left:1270px;top:78px" width="7" height="9"><path d="M0.5 1h5.5" stroke="#fff" stroke-width="1.4"/><path d="M1 4h5l-2.5 3.5z" fill="#fff"/></svg>
<svg class="ic" style="left:949px;top:117px" width="18" height="18" viewBox="949 117 18 18"><path d="M961.2 128.4L966.4 132.8" stroke="#000" stroke-width="2.2"/><circle cx="957.6" cy="124.6" r="4.9" fill="#ffff00" stroke="#000" stroke-width="1.1"/><path d="M954.1 124.6h7M957.6 121.1v7" stroke="#000" stroke-width="1.1"/></svg>
<svg class="ic" style="left:971px;top:117px" width="18" height="18" viewBox="971 117 18 18"><path d="M983.5 128.4L988.7 132.8" stroke="#000" stroke-width="2.2"/><circle cx="979.9" cy="124.6" r="4.9" fill="#ffff00" stroke="#000" stroke-width="1.1"/><path d="M976.4 124.6h7" stroke="#000" stroke-width="1.2"/></svg>
<svg class="ic" style="left:993px;top:117px" width="18" height="18" viewBox="993 117 18 18"><path d="M1005.3 128.4L1010.5 132.8" stroke="#000" stroke-width="2.2"/><circle cx="1001.7" cy="124.6" r="4.9" fill="#ffff00" stroke="#000" stroke-width="1.1"/><path d="M999.7 127.3v-5.4l4 5.4v-5.4" stroke="#000" stroke-width="1.1" fill="none"/></svg>
</div>
<div class="" style="left:2px;top:0px;width:1276px;height:766px;border:1px solid rgba(70,70,80,.5);border-radius:9px"></div>
</body></html>
